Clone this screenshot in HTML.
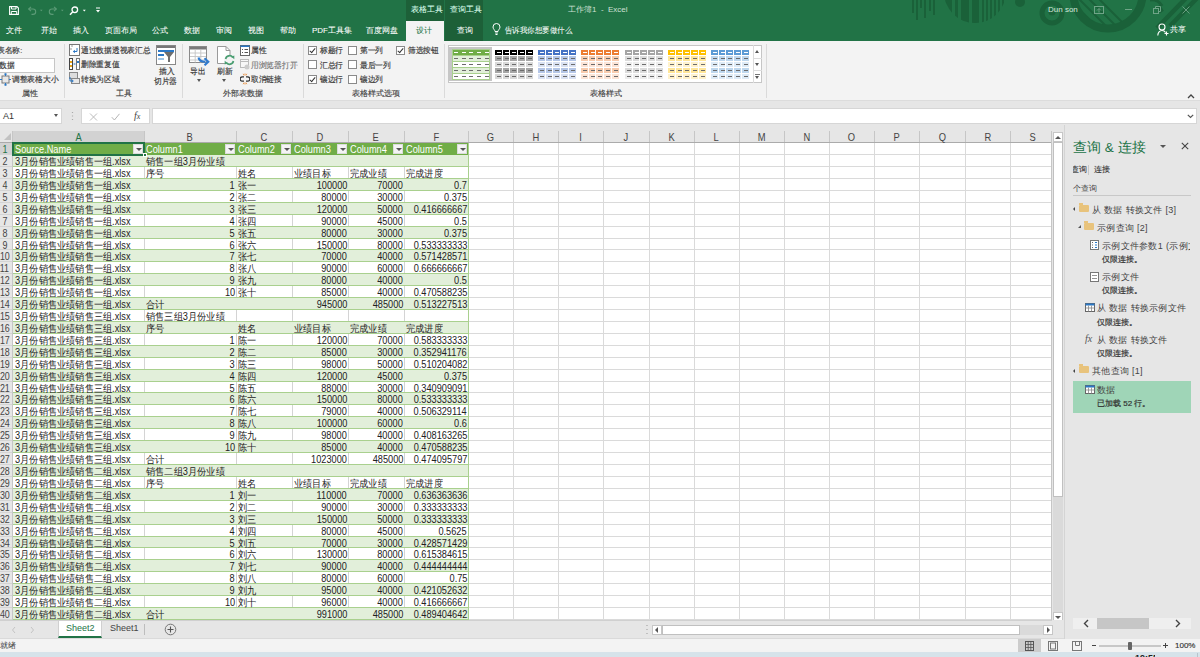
<!DOCTYPE html>
<html><head><meta charset="utf-8">
<style>
*{margin:0;padding:0;box-sizing:border-box}
html,body{width:1200px;height:657px;overflow:hidden;background:#fff;font-family:"Liberation Sans",sans-serif;color:#262626}
.a{position:absolute;white-space:nowrap}
.tab{position:absolute;top:27px;font-size:8px;color:#fff;line-height:8px;-webkit-text-stroke:0.05px currentColor;white-space:nowrap}
.hl{height:1px;background:#dadada}
.vl{width:1px;background:#dadada}
.vl2{width:1px;height:11px;background:#c6c6c6}
.ct{font-size:10px;line-height:11px;color:#222;transform:scaleX(0.92);transform-origin:0 0}
.ct.rt{transform-origin:100% 0}
.hd{color:#fff}
.fb{width:10px;height:10px;background:#f4f4f4;border:1px solid #dcdcdc}
.fb i{position:absolute;left:2px;top:3px;border-left:3px solid transparent;border-right:3px solid transparent;border-top:3px solid #555}
.colh{top:131px;height:11px;font-size:11px;line-height:13px;text-align:center;color:#444}
.colh span{display:inline-block;transform:scaleX(0.85)}
.colh.sel{color:#217346}
.rowh{left:-1px;width:11px;font-size:10.5px;line-height:12px;text-align:center;color:#444}
.rowh span{display:inline-block;transform:scaleX(0.85)}
.rowh.sel{color:#217346}
.rb{position:absolute;margin-top:1px;transform:scaleX(0.965);transform-origin:0 0;font-size:7.5px;line-height:10px;color:#3a3a3a;-webkit-text-stroke:0.18px #3a3a3a;white-space:nowrap}
.sep{top:44px;width:1px;height:54px;background:#dadada}
.tri{border-left:2.5px solid transparent;border-right:2.5px solid transparent;border-top:3px solid #555}
.cb{width:9px;height:9px;border:1px solid #8a8a8a;background:#fff}
.cb i{position:absolute;left:2px;top:0px;width:3px;height:6px;border-right:1px solid #333;border-bottom:1px solid #333;transform:rotate(40deg)}
.pt{position:absolute;margin-top:2px;font-size:8px;line-height:10px;color:#333;-webkit-text-stroke:0.2px #333;white-space:nowrap}
.pt2{position:absolute;margin-top:1px;font-size:9px;line-height:12px;color:#444;letter-spacing:0.3px;white-space:nowrap}
.fold{position:absolute;width:10px;height:7px;background:#e8c37c;border-radius:1px}
.fold:before{content:"";position:absolute;left:0;top:-2px;width:4px;height:2px;background:#e8c37c}
.gl{position:absolute;margin-top:1px;font-size:7.5px;line-height:10px;color:#444;-webkit-text-stroke:0.15px #444;white-space:nowrap}
</style></head><body>
<!-- title bar -->
<div class="a" style="left:0;top:0;width:1200px;height:41px;background:#217346"></div>
<div class="a" style="left:406px;top:0;width:38px;height:41px;background:#1d6038"></div>
<div class="a" style="left:445px;top:0;width:38px;height:41px;background:#1d6038"></div>
<div class="a" style="left:406px;top:21px;width:38px;height:20px;background:#f3f3f3"></div>
<!-- decorative pattern -->
<svg class="a" style="left:800px;top:0" width="400" height="41" viewBox="800 0 400 41">
 <g fill="#1a6139">
  <rect x="912" y="0" width="2" height="13"/><rect x="916" y="0" width="2" height="20"/><rect x="920" y="0" width="2" height="8"/><rect x="924" y="0" width="2" height="18"/><rect x="929" y="0" width="2" height="11"/><rect x="933" y="0" width="2" height="15"/>
 </g>
 <clipPath id="hc"><circle cx="975" cy="-8" r="31"/></clipPath>
 <g clip-path="url(#hc)" fill="#1a6139">
  <rect x="944" y="0" width="8" height="40"/><rect x="955" y="0" width="3" height="40"/><rect x="961" y="0" width="8" height="40"/><rect x="972" y="0" width="7" height="40"/><rect x="982" y="0" width="2" height="40"/><rect x="986" y="0" width="2" height="40"/><rect x="990" y="0" width="2" height="40"/><rect x="994" y="0" width="2" height="40"/><rect x="998" y="0" width="2" height="40"/><rect x="1002" y="0" width="2" height="40"/>
 </g>
 <circle cx="1020" cy="2" r="5" fill="#1a6139"/>
 <circle cx="1052" cy="13" r="10" fill="none" stroke="#1a6139" stroke-width="5"/>
 <circle cx="1052" cy="12" r="3.5" fill="#1a6139"/>
 <circle cx="1108" cy="-6" r="34.5" fill="none" stroke="#1a6139" stroke-width="8"/>
 <clipPath id="bc"><circle cx="1108" cy="-6" r="31"/></clipPath>
 <g clip-path="url(#bc)" stroke="#1a6139" stroke-width="2">
  <path d="M1060 0l40 40M1066 -4l40 40M1072 -8l40 40M1078 -12l40 40M1084 -16l40 40"/>
 </g>
 <g stroke="#1a6139" stroke-width="4.5">
  <path d="M1157 28l32-33M1170 26l32-33M1162 12l-4-6"/>
 </g>
 <path d="M1150 0a12 12 0 0 1 12 6" stroke="#1a6139" stroke-width="3" fill="none"/>
</svg>
<!-- QAT -->
<svg class="a" style="left:9px;top:6px" width="10" height="9" viewBox="0 0 10 9">
 <path d="M0.6 0.6h7.4l1.4 1.4v6.4H0.6z" fill="none" stroke="#fff" stroke-width="1.1"/>
 <path d="M2.5 0.6v2.4h4.5V0.6" fill="none" stroke="#fff" stroke-width="1"/>
 <path d="M2.3 8.4V5.5h5.4v2.9" fill="none" stroke="#fff" stroke-width="1"/>
</svg>
<svg class="a" style="left:27px;top:6px" width="17" height="9" viewBox="0 0 17 9">
 <path d="M2 3h4a2.7 2.7 0 0 1 0 5.4H4.5" fill="none" stroke="#5c9b77" stroke-width="1.1"/>
 <path d="M4 0.8L1.6 3 4 5.2" fill="none" stroke="#5c9b77" stroke-width="1.1"/>
 <path d="M13 3.8h2.6l-1.3 1.4z" fill="#5c9b77"/>
</svg>
<svg class="a" style="left:48px;top:6px" width="17" height="9" viewBox="0 0 17 9">
 <path d="M8 3H4a2.7 2.7 0 0 0 0 5.4h1.5" fill="none" stroke="#5c9b77" stroke-width="1.1"/>
 <path d="M6 0.8L8.4 3 6 5.2" fill="none" stroke="#5c9b77" stroke-width="1.1"/>
 <path d="M13 3.8h2.6l-1.3 1.4z" fill="#5c9b77"/>
</svg>
<svg class="a" style="left:69px;top:6px" width="19" height="10" viewBox="0 0 19 10">
 <circle cx="5.8" cy="3.8" r="2.8" fill="none" stroke="#fff" stroke-width="1.3"/>
 <path d="M3.8 5.8L1 8.8" stroke="#fff" stroke-width="1.5"/>
 <path d="M13.8 3.8h3l-1.5 1.7z" fill="#fff"/>
</svg>
<svg class="a" style="left:95px;top:7px" width="6" height="7" viewBox="0 0 6 7">
 <path d="M1 1h4" stroke="#fff" stroke-width="1"/>
 <path d="M1 3h4l-2 2.5z" fill="#fff"/>
</svg>
<!-- window controls -->
<svg class="a" style="left:1094px;top:6px" width="10" height="8" viewBox="0 0 10 8">
 <rect x="0.5" y="0.5" width="9" height="7" fill="none" stroke="#6fa487" stroke-width="1"/>
 <path d="M3 4.5l2-2 2 2M5 2.5v4" fill="none" stroke="#6fa487" stroke-width="0.9"/>
</svg>
<div class="a" style="left:1125px;top:9px;width:7px;height:1px;background:#6fa487"></div>
<svg class="a" style="left:1153px;top:6px" width="8" height="8" viewBox="0 0 8 8">
 <rect x="0.5" y="2.5" width="5" height="5" fill="none" stroke="#6fa487"/>
 <path d="M2.5 2.5v-2h5v5h-2" fill="none" stroke="#6fa487"/>
</svg>
<svg class="a" style="left:1182px;top:6px" width="8" height="8" viewBox="0 0 8 8">
 <path d="M0.5 0.5l7 7M7.5 0.5l-7 7" stroke="#6fa487" stroke-width="0.9"/>
</svg>
<!-- share -->
<svg class="a" style="left:1157px;top:23px" width="12" height="13" viewBox="0 0 12 13">
 <circle cx="5" cy="4" r="3" fill="none" stroke="#fff" stroke-width="1.1"/>
 <path d="M0.8 12.5c0-3 2-5 4.2-5s3 1 3.5 2" fill="none" stroke="#fff" stroke-width="1.1"/>
 <path d="M9.5 8.5v4M7.5 10.5h4" stroke="#fff" stroke-width="1.1"/>
</svg>
<!-- lightbulb -->
<svg class="a" style="left:492px;top:23px" width="9" height="12" viewBox="0 0 9 12">
 <path d="M3 8.5C3 7 1 6 1 4a3.5 3.5 0 0 1 7 0c0 2-2 3-2 4.5z" fill="none" stroke="#fff" stroke-width="1"/>
 <path d="M3.2 10h2.6M3.5 11.5h2" stroke="#fff" stroke-width="1"/>
</svg>

<div class="tab" style="left:6px">文件</div>
<div class="tab" style="left:41px">开始</div>
<div class="tab" style="left:73px">插入</div>
<div class="tab" style="left:105px">页面布局</div>
<div class="tab" style="left:152px">公式</div>
<div class="tab" style="left:184px">数据</div>
<div class="tab" style="left:216px">审阅</div>
<div class="tab" style="left:248px">视图</div>
<div class="tab" style="left:280px">帮助</div>
<div class="tab" style="left:312px">PDF工具集</div>
<div class="tab" style="left:366px">百度网盘</div>
<div class="tab" style="left:416px;color:#217346">设计</div>
<div class="tab" style="left:457px">查询</div>
<div class="tab" style="left:505px;transform:scaleX(0.93);transform-origin:0 0">告诉我你想要做什么</div>
<div class="tab" style="left:411px;top:6px;color:#dfe">表格工具</div>
<div class="tab" style="left:450px;top:6px;color:#dfe">查询工具</div>
<div class="tab" style="left:568px;top:6px;color:#cfe0d4;-webkit-text-stroke:0">工作簿1 &nbsp;- &nbsp;Excel</div>
<div class="tab" style="left:1048px;top:6px;color:#d5e6da;-webkit-text-stroke:0">Dun son</div>
<div class="tab" style="left:1170px;top:26px">共享</div>
<div class="a" style="left:0;top:100px;width:1200px;height:31px;background:#e6e6e6"></div>
<!-- ===== RIBBON ===== -->
<div class="a" style="left:0;top:41px;width:1200px;height:59px;background:#f3f3f3"></div>
<div class="a" style="left:0;top:100px;width:1200px;height:1px;background:#dcdcdc"></div>
<!-- group separators -->
<div class="a sep" style="left:64px"></div>
<div class="a sep" style="left:182px"></div>
<div class="a sep" style="left:303px"></div>
<div class="a sep" style="left:444px"></div>
<div class="a sep" style="left:766px"></div>
<!-- group labels -->
<div class="gl" style="left:22px;top:88px">属性</div>
<div class="gl" style="left:116px;top:88px">工具</div>
<div class="gl" style="left:223px;top:88px">外部表数据</div>
<div class="gl" style="left:352px;top:88px">表格样式选项</div>
<div class="gl" style="left:590px;top:88px">表格样式</div>
<!-- 属性 group -->
<div class="rb" style="left:-3px;top:45px">表名称:</div>
<div class="a" style="left:-1px;top:58px;width:56px;height:15px;background:#fff;border:1px solid #c6c6c6"></div>
<div class="rb" style="left:-1px;top:60px">数据</div>
<svg class="a" style="left:0;top:73px" width="11" height="13" viewBox="0 0 11 13">
 <rect x="2" y="3" width="7" height="7" fill="#e8e8e8" stroke="#7a7a7a" stroke-width="1"/>
 <path d="M5.5 0.5v2.5M5.5 10v2.5M0 6.5h2M9 6.5h2" stroke="#2b78c6" stroke-width="1"/>
 <path d="M4 1.5l1.5-1.2 1.5 1.2M4 11.5l1.5 1.2 1.5-1.2" stroke="#2b78c6" fill="none" stroke-width="0.9"/>
</svg>
<div class="rb" style="left:12px;top:74px">调整表格大小</div>
<!-- 工具 group -->
<svg class="a" style="left:69px;top:44px" width="11" height="12" viewBox="0 0 11 12">
 <rect x="0.5" y="0.5" width="10" height="11" fill="#fff" stroke="#777"/>
 <path d="M2 2h2M2 4v2" stroke="#999" stroke-width="1"/>
 <path d="M8 4v3.5H4.5M5.8 6.2L4.3 7.5l1.5 1.3" stroke="#2b78c6" stroke-width="1" fill="none"/>
</svg>
<div class="rb" style="left:81px;top:45px">通过数据透视表汇总</div>
<svg class="a" style="left:69px;top:58px" width="11" height="12" viewBox="0 0 11 12">
 <rect x="0.5" y="0.5" width="3" height="11" fill="#fff" stroke="#444"/>
 <rect x="7.5" y="0.5" width="3" height="11" fill="#fff" stroke="#777"/>
 <rect x="1" y="3" width="2" height="2" fill="#e8a317"/><rect x="1" y="7" width="2" height="2" fill="#e8a317"/>
 <rect x="8" y="3" width="2" height="2" fill="#2b78c6"/>
 <path d="M4.5 6h2" stroke="#2b78c6"/>
</svg>
<div class="rb" style="left:81px;top:59px">删除重复值</div>
<svg class="a" style="left:69px;top:72px" width="11" height="13" viewBox="0 0 11 13">
 <rect x="0.5" y="0.5" width="8" height="6" fill="#ddd" stroke="#888"/>
 <rect x="2.5" y="6.5" width="8" height="5" fill="#e8e8e8" stroke="#888"/>
 <path d="M1 5v4h3M3 7.8l1.3 1.2L3 10.2" stroke="#2b78c6" fill="none"/>
</svg>
<div class="rb" style="left:81px;top:74px">转换为区域</div>
<!-- insert slicer -->
<svg class="a" style="left:156px;top:45px" width="20" height="20" viewBox="0 0 20 20">
 <rect x="0.5" y="0.5" width="19" height="19" fill="#fff" stroke="#888"/>
 <rect x="1" y="1" width="18" height="2" fill="#777"/>
 <rect x="2" y="5" width="16" height="2" fill="#2b78c6"/>
 <rect x="2" y="9" width="6" height="2" fill="#2b78c6"/>
 <rect x="2" y="13" width="6" height="2" fill="#9cc3e6"/>
 <path d="M8 7h10l-4 5v5h-2v-5z" fill="#6d6d6d"/>
</svg>
<div class="rb" style="left:159px;top:66px">插入</div>
<div class="rb" style="left:154px;top:76px">切片器</div>
<!-- external table data -->
<svg class="a" style="left:189px;top:46px" width="21" height="20" viewBox="0 0 21 20">
 <rect x="0.5" y="0.5" width="17" height="16" fill="#fff" stroke="#8a8a8a"/>
 <rect x="1" y="1" width="16" height="2.5" fill="#7a7a7a"/>
 <path d="M1 7h16M1 10.5h16M1 14h16M6.2 3.5v13M11.8 3.5v13" stroke="#c4c4c4" stroke-width="0.9"/>
 <path d="M9.5 11.5c0.5 3 3 4.3 7 4.3" stroke="#2f7bd0" stroke-width="2.1" fill="none"/>
 <path d="M15.5 12.3l3.8 3.5-3.8 3.5" stroke="#2f7bd0" stroke-width="2.1" fill="none"/>
</svg>
<div class="rb" style="left:190px;top:66px">导出</div>
<div class="a tri" style="left:197px;top:79px"></div>
<svg class="a" style="left:216px;top:45px" width="20" height="21" viewBox="0 0 20 21">
 <path d="M1.5 1.5h8.5l4 4v13h-12.5z" fill="#fff" stroke="#9a9a9a"/>
 <path d="M10 1.5v4h4" fill="none" stroke="#9a9a9a"/>
 <circle cx="13.5" cy="15" r="5.3" fill="#f3f3f3"/>
 <path d="M9.6 14a4 4 0 0 1 7.2-1.6" stroke="#4a9e72" stroke-width="1.7" fill="none"/>
 <path d="M17.4 16a4 4 0 0 1-7.2 1.6" stroke="#4a9e72" stroke-width="1.7" fill="none"/>
 <path d="M15.3 11.8l3-1.2 0 3.6z" fill="#4a9e72"/>
 <path d="M11.7 18.2l-3 1.2 0-3.6z" fill="#4a9e72"/>
</svg>
<div class="rb" style="left:217px;top:66px">刷新</div>
<div class="a tri" style="left:222px;top:79px"></div>
<svg class="a" style="left:240px;top:45px" width="10" height="11" viewBox="0 0 10 11">
 <rect x="0.5" y="0.5" width="9" height="10" fill="#fff" stroke="#666"/>
 <rect x="0.5" y="0.5" width="9" height="1.5" fill="#2b78c6"/>
 <path d="M2 4.5h1M2 7.5h1M4.5 4.5h3.5M4.5 7.5h3.5" stroke="#555"/>
</svg>
<div class="rb" style="left:251px;top:45px">属性</div>
<svg class="a" style="left:240px;top:59px" width="10" height="11" viewBox="0 0 10 11">
 <rect x="0.5" y="0.5" width="8" height="8" fill="#f7f7f7" stroke="#bbb"/>
 <path d="M0.5 2.5h8" stroke="#bbb"/>
 <circle cx="7" cy="8" r="2.5" fill="#ccc"/>
</svg>
<div class="rb" style="left:251px;top:60px;color:#a6a6a6">用浏览器打开</div>
<svg class="a" style="left:240px;top:73px" width="10" height="12" viewBox="0 0 10 12">
 <path d="M4 3.8H2.3a2.2 2.2 0 0 0 0 4.4H4M6 3.8h1.7a2.2 2.2 0 0 1 0 4.4H6" stroke="#333" fill="none" stroke-width="1.2"/>
 <path d="M3.2 0.8l0.8 1.6M5 0.5v1.8M6.8 0.8L6 2.4M3.2 11.2l0.8-1.6M5 11.5V9.7M6.8 11.2L6 9.6" stroke="#e8862e" stroke-width="0.8"/>
</svg>
<div class="rb" style="left:251px;top:74px">取消链接</div>
<!-- table style options checkboxes -->
<div class="a cb" style="left:308px;top:46px"><i></i></div>
<div class="rb" style="left:320px;top:45px">标题行</div>
<div class="a cb" style="left:308px;top:60px"></div>
<div class="rb" style="left:320px;top:60px">汇总行</div>
<div class="a cb" style="left:308px;top:75px"><i></i></div>
<div class="rb" style="left:320px;top:74px">镶边行</div>
<div class="a cb" style="left:348px;top:46px"></div>
<div class="rb" style="left:360px;top:45px">第一列</div>
<div class="a cb" style="left:348px;top:60px"></div>
<div class="rb" style="left:360px;top:60px">最后一列</div>
<div class="a cb" style="left:348px;top:75px"></div>
<div class="rb" style="left:360px;top:74px">镶边列</div>
<div class="a cb" style="left:396px;top:46px"><i></i></div>
<div class="rb" style="left:408px;top:45px">筛选按钮</div>
<!-- gallery -->
<div class="a" style="left:448px;top:45px;width:314px;height:38px;background:#fff;border:1px solid #c6c6c6"></div>
<div class="a" style="left:449px;top:47px;width:43px;height:34px;background:#c6c6c6"></div>
<div class="a" style="left:452px;top:49px;width:38px;height:31px;background:#a9d08e"></div>
<div class="a" style="left:453px;top:50px;width:36px;height:5px;background:#70ad47"></div>
<div class="a" style="left:454px;top:52px;width:4px;height:1px;background:#fff"></div>
<div class="a" style="left:462px;top:52px;width:4px;height:1px;background:#fff"></div>
<div class="a" style="left:469px;top:52px;width:4px;height:1px;background:#fff"></div>
<div class="a" style="left:477px;top:52px;width:4px;height:1px;background:#fff"></div>
<div class="a" style="left:485px;top:52px;width:4px;height:1px;background:#fff"></div>
<div class="a" style="left:453px;top:56px;width:36px;height:5px;background:#e2efda"></div>
<div class="a" style="left:454px;top:58px;width:4px;height:1px;background:#6b6b6b"></div>
<div class="a" style="left:462px;top:58px;width:4px;height:1px;background:#6b6b6b"></div>
<div class="a" style="left:469px;top:58px;width:4px;height:1px;background:#6b6b6b"></div>
<div class="a" style="left:477px;top:58px;width:4px;height:1px;background:#6b6b6b"></div>
<div class="a" style="left:485px;top:58px;width:4px;height:1px;background:#6b6b6b"></div>
<div class="a" style="left:453px;top:62px;width:36px;height:5px;background:#fff"></div>
<div class="a" style="left:454px;top:64px;width:4px;height:1px;background:#6b6b6b"></div>
<div class="a" style="left:462px;top:64px;width:4px;height:1px;background:#6b6b6b"></div>
<div class="a" style="left:469px;top:64px;width:4px;height:1px;background:#6b6b6b"></div>
<div class="a" style="left:477px;top:64px;width:4px;height:1px;background:#6b6b6b"></div>
<div class="a" style="left:485px;top:64px;width:4px;height:1px;background:#6b6b6b"></div>
<div class="a" style="left:453px;top:68px;width:36px;height:5px;background:#e2efda"></div>
<div class="a" style="left:454px;top:70px;width:4px;height:1px;background:#6b6b6b"></div>
<div class="a" style="left:462px;top:70px;width:4px;height:1px;background:#6b6b6b"></div>
<div class="a" style="left:469px;top:70px;width:4px;height:1px;background:#6b6b6b"></div>
<div class="a" style="left:477px;top:70px;width:4px;height:1px;background:#6b6b6b"></div>
<div class="a" style="left:485px;top:70px;width:4px;height:1px;background:#6b6b6b"></div>
<div class="a" style="left:453px;top:74px;width:36px;height:5px;background:#fff"></div>
<div class="a" style="left:454px;top:76px;width:4px;height:1px;background:#6b6b6b"></div>
<div class="a" style="left:462px;top:76px;width:4px;height:1px;background:#6b6b6b"></div>
<div class="a" style="left:469px;top:76px;width:4px;height:1px;background:#6b6b6b"></div>
<div class="a" style="left:477px;top:76px;width:4px;height:1px;background:#6b6b6b"></div>
<div class="a" style="left:485px;top:76px;width:4px;height:1px;background:#6b6b6b"></div>
<div class="a" style="left:495px;top:50px;width:7px;height:5px;background:#000000"></div>
<div class="a" style="left:497px;top:52px;width:4px;height:1px;background:#fff"></div>
<div class="a" style="left:503px;top:50px;width:6px;height:5px;background:#000000"></div>
<div class="a" style="left:505px;top:52px;width:4px;height:1px;background:#fff"></div>
<div class="a" style="left:510px;top:50px;width:7px;height:5px;background:#000000"></div>
<div class="a" style="left:512px;top:52px;width:4px;height:1px;background:#fff"></div>
<div class="a" style="left:518px;top:50px;width:7px;height:5px;background:#000000"></div>
<div class="a" style="left:520px;top:52px;width:4px;height:1px;background:#fff"></div>
<div class="a" style="left:526px;top:50px;width:7px;height:5px;background:#000000"></div>
<div class="a" style="left:528px;top:52px;width:4px;height:1px;background:#fff"></div>
<div class="a" style="left:495px;top:56px;width:7px;height:5px;background:#a6a6a6"></div>
<div class="a" style="left:497px;top:58px;width:4px;height:1px;background:#6b6b6b"></div>
<div class="a" style="left:503px;top:56px;width:6px;height:5px;background:#a6a6a6"></div>
<div class="a" style="left:505px;top:58px;width:4px;height:1px;background:#6b6b6b"></div>
<div class="a" style="left:510px;top:56px;width:7px;height:5px;background:#a6a6a6"></div>
<div class="a" style="left:512px;top:58px;width:4px;height:1px;background:#6b6b6b"></div>
<div class="a" style="left:518px;top:56px;width:7px;height:5px;background:#a6a6a6"></div>
<div class="a" style="left:520px;top:58px;width:4px;height:1px;background:#6b6b6b"></div>
<div class="a" style="left:526px;top:56px;width:7px;height:5px;background:#a6a6a6"></div>
<div class="a" style="left:528px;top:58px;width:4px;height:1px;background:#6b6b6b"></div>
<div class="a" style="left:495px;top:62px;width:7px;height:5px;background:#d9d9d9"></div>
<div class="a" style="left:497px;top:64px;width:4px;height:1px;background:#6b6b6b"></div>
<div class="a" style="left:503px;top:62px;width:6px;height:5px;background:#d9d9d9"></div>
<div class="a" style="left:505px;top:64px;width:4px;height:1px;background:#6b6b6b"></div>
<div class="a" style="left:510px;top:62px;width:7px;height:5px;background:#d9d9d9"></div>
<div class="a" style="left:512px;top:64px;width:4px;height:1px;background:#6b6b6b"></div>
<div class="a" style="left:518px;top:62px;width:7px;height:5px;background:#d9d9d9"></div>
<div class="a" style="left:520px;top:64px;width:4px;height:1px;background:#6b6b6b"></div>
<div class="a" style="left:526px;top:62px;width:7px;height:5px;background:#d9d9d9"></div>
<div class="a" style="left:528px;top:64px;width:4px;height:1px;background:#6b6b6b"></div>
<div class="a" style="left:495px;top:68px;width:7px;height:5px;background:#a6a6a6"></div>
<div class="a" style="left:497px;top:70px;width:4px;height:1px;background:#6b6b6b"></div>
<div class="a" style="left:503px;top:68px;width:6px;height:5px;background:#a6a6a6"></div>
<div class="a" style="left:505px;top:70px;width:4px;height:1px;background:#6b6b6b"></div>
<div class="a" style="left:510px;top:68px;width:7px;height:5px;background:#a6a6a6"></div>
<div class="a" style="left:512px;top:70px;width:4px;height:1px;background:#6b6b6b"></div>
<div class="a" style="left:518px;top:68px;width:7px;height:5px;background:#a6a6a6"></div>
<div class="a" style="left:520px;top:70px;width:4px;height:1px;background:#6b6b6b"></div>
<div class="a" style="left:526px;top:68px;width:7px;height:5px;background:#a6a6a6"></div>
<div class="a" style="left:528px;top:70px;width:4px;height:1px;background:#6b6b6b"></div>
<div class="a" style="left:495px;top:74px;width:7px;height:5px;background:#d9d9d9"></div>
<div class="a" style="left:497px;top:76px;width:4px;height:1px;background:#6b6b6b"></div>
<div class="a" style="left:503px;top:74px;width:6px;height:5px;background:#d9d9d9"></div>
<div class="a" style="left:505px;top:76px;width:4px;height:1px;background:#6b6b6b"></div>
<div class="a" style="left:510px;top:74px;width:7px;height:5px;background:#d9d9d9"></div>
<div class="a" style="left:512px;top:76px;width:4px;height:1px;background:#6b6b6b"></div>
<div class="a" style="left:518px;top:74px;width:7px;height:5px;background:#d9d9d9"></div>
<div class="a" style="left:520px;top:76px;width:4px;height:1px;background:#6b6b6b"></div>
<div class="a" style="left:526px;top:74px;width:7px;height:5px;background:#d9d9d9"></div>
<div class="a" style="left:528px;top:76px;width:4px;height:1px;background:#6b6b6b"></div>
<div class="a" style="left:538px;top:50px;width:7px;height:5px;background:#4472c4"></div>
<div class="a" style="left:540px;top:52px;width:4px;height:1px;background:#fff"></div>
<div class="a" style="left:546px;top:50px;width:6px;height:5px;background:#4472c4"></div>
<div class="a" style="left:548px;top:52px;width:4px;height:1px;background:#fff"></div>
<div class="a" style="left:553px;top:50px;width:7px;height:5px;background:#4472c4"></div>
<div class="a" style="left:555px;top:52px;width:4px;height:1px;background:#fff"></div>
<div class="a" style="left:561px;top:50px;width:7px;height:5px;background:#4472c4"></div>
<div class="a" style="left:563px;top:52px;width:4px;height:1px;background:#fff"></div>
<div class="a" style="left:569px;top:50px;width:7px;height:5px;background:#4472c4"></div>
<div class="a" style="left:571px;top:52px;width:4px;height:1px;background:#fff"></div>
<div class="a" style="left:538px;top:56px;width:7px;height:5px;background:#b4c6e7"></div>
<div class="a" style="left:540px;top:58px;width:4px;height:1px;background:#6b6b6b"></div>
<div class="a" style="left:546px;top:56px;width:6px;height:5px;background:#b4c6e7"></div>
<div class="a" style="left:548px;top:58px;width:4px;height:1px;background:#6b6b6b"></div>
<div class="a" style="left:553px;top:56px;width:7px;height:5px;background:#b4c6e7"></div>
<div class="a" style="left:555px;top:58px;width:4px;height:1px;background:#6b6b6b"></div>
<div class="a" style="left:561px;top:56px;width:7px;height:5px;background:#b4c6e7"></div>
<div class="a" style="left:563px;top:58px;width:4px;height:1px;background:#6b6b6b"></div>
<div class="a" style="left:569px;top:56px;width:7px;height:5px;background:#b4c6e7"></div>
<div class="a" style="left:571px;top:58px;width:4px;height:1px;background:#6b6b6b"></div>
<div class="a" style="left:538px;top:62px;width:7px;height:5px;background:#d9e1f2"></div>
<div class="a" style="left:540px;top:64px;width:4px;height:1px;background:#6b6b6b"></div>
<div class="a" style="left:546px;top:62px;width:6px;height:5px;background:#d9e1f2"></div>
<div class="a" style="left:548px;top:64px;width:4px;height:1px;background:#6b6b6b"></div>
<div class="a" style="left:553px;top:62px;width:7px;height:5px;background:#d9e1f2"></div>
<div class="a" style="left:555px;top:64px;width:4px;height:1px;background:#6b6b6b"></div>
<div class="a" style="left:561px;top:62px;width:7px;height:5px;background:#d9e1f2"></div>
<div class="a" style="left:563px;top:64px;width:4px;height:1px;background:#6b6b6b"></div>
<div class="a" style="left:569px;top:62px;width:7px;height:5px;background:#d9e1f2"></div>
<div class="a" style="left:571px;top:64px;width:4px;height:1px;background:#6b6b6b"></div>
<div class="a" style="left:538px;top:68px;width:7px;height:5px;background:#b4c6e7"></div>
<div class="a" style="left:540px;top:70px;width:4px;height:1px;background:#6b6b6b"></div>
<div class="a" style="left:546px;top:68px;width:6px;height:5px;background:#b4c6e7"></div>
<div class="a" style="left:548px;top:70px;width:4px;height:1px;background:#6b6b6b"></div>
<div class="a" style="left:553px;top:68px;width:7px;height:5px;background:#b4c6e7"></div>
<div class="a" style="left:555px;top:70px;width:4px;height:1px;background:#6b6b6b"></div>
<div class="a" style="left:561px;top:68px;width:7px;height:5px;background:#b4c6e7"></div>
<div class="a" style="left:563px;top:70px;width:4px;height:1px;background:#6b6b6b"></div>
<div class="a" style="left:569px;top:68px;width:7px;height:5px;background:#b4c6e7"></div>
<div class="a" style="left:571px;top:70px;width:4px;height:1px;background:#6b6b6b"></div>
<div class="a" style="left:538px;top:74px;width:7px;height:5px;background:#d9e1f2"></div>
<div class="a" style="left:540px;top:76px;width:4px;height:1px;background:#6b6b6b"></div>
<div class="a" style="left:546px;top:74px;width:6px;height:5px;background:#d9e1f2"></div>
<div class="a" style="left:548px;top:76px;width:4px;height:1px;background:#6b6b6b"></div>
<div class="a" style="left:553px;top:74px;width:7px;height:5px;background:#d9e1f2"></div>
<div class="a" style="left:555px;top:76px;width:4px;height:1px;background:#6b6b6b"></div>
<div class="a" style="left:561px;top:74px;width:7px;height:5px;background:#d9e1f2"></div>
<div class="a" style="left:563px;top:76px;width:4px;height:1px;background:#6b6b6b"></div>
<div class="a" style="left:569px;top:74px;width:7px;height:5px;background:#d9e1f2"></div>
<div class="a" style="left:571px;top:76px;width:4px;height:1px;background:#6b6b6b"></div>
<div class="a" style="left:581px;top:50px;width:7px;height:5px;background:#ed7d31"></div>
<div class="a" style="left:583px;top:52px;width:4px;height:1px;background:#fff"></div>
<div class="a" style="left:589px;top:50px;width:6px;height:5px;background:#ed7d31"></div>
<div class="a" style="left:591px;top:52px;width:4px;height:1px;background:#fff"></div>
<div class="a" style="left:596px;top:50px;width:7px;height:5px;background:#ed7d31"></div>
<div class="a" style="left:598px;top:52px;width:4px;height:1px;background:#fff"></div>
<div class="a" style="left:604px;top:50px;width:7px;height:5px;background:#ed7d31"></div>
<div class="a" style="left:606px;top:52px;width:4px;height:1px;background:#fff"></div>
<div class="a" style="left:612px;top:50px;width:7px;height:5px;background:#ed7d31"></div>
<div class="a" style="left:614px;top:52px;width:4px;height:1px;background:#fff"></div>
<div class="a" style="left:581px;top:56px;width:7px;height:5px;background:#f8cbad"></div>
<div class="a" style="left:583px;top:58px;width:4px;height:1px;background:#6b6b6b"></div>
<div class="a" style="left:589px;top:56px;width:6px;height:5px;background:#f8cbad"></div>
<div class="a" style="left:591px;top:58px;width:4px;height:1px;background:#6b6b6b"></div>
<div class="a" style="left:596px;top:56px;width:7px;height:5px;background:#f8cbad"></div>
<div class="a" style="left:598px;top:58px;width:4px;height:1px;background:#6b6b6b"></div>
<div class="a" style="left:604px;top:56px;width:7px;height:5px;background:#f8cbad"></div>
<div class="a" style="left:606px;top:58px;width:4px;height:1px;background:#6b6b6b"></div>
<div class="a" style="left:612px;top:56px;width:7px;height:5px;background:#f8cbad"></div>
<div class="a" style="left:614px;top:58px;width:4px;height:1px;background:#6b6b6b"></div>
<div class="a" style="left:581px;top:62px;width:7px;height:5px;background:#fce4d6"></div>
<div class="a" style="left:583px;top:64px;width:4px;height:1px;background:#6b6b6b"></div>
<div class="a" style="left:589px;top:62px;width:6px;height:5px;background:#fce4d6"></div>
<div class="a" style="left:591px;top:64px;width:4px;height:1px;background:#6b6b6b"></div>
<div class="a" style="left:596px;top:62px;width:7px;height:5px;background:#fce4d6"></div>
<div class="a" style="left:598px;top:64px;width:4px;height:1px;background:#6b6b6b"></div>
<div class="a" style="left:604px;top:62px;width:7px;height:5px;background:#fce4d6"></div>
<div class="a" style="left:606px;top:64px;width:4px;height:1px;background:#6b6b6b"></div>
<div class="a" style="left:612px;top:62px;width:7px;height:5px;background:#fce4d6"></div>
<div class="a" style="left:614px;top:64px;width:4px;height:1px;background:#6b6b6b"></div>
<div class="a" style="left:581px;top:68px;width:7px;height:5px;background:#f8cbad"></div>
<div class="a" style="left:583px;top:70px;width:4px;height:1px;background:#6b6b6b"></div>
<div class="a" style="left:589px;top:68px;width:6px;height:5px;background:#f8cbad"></div>
<div class="a" style="left:591px;top:70px;width:4px;height:1px;background:#6b6b6b"></div>
<div class="a" style="left:596px;top:68px;width:7px;height:5px;background:#f8cbad"></div>
<div class="a" style="left:598px;top:70px;width:4px;height:1px;background:#6b6b6b"></div>
<div class="a" style="left:604px;top:68px;width:7px;height:5px;background:#f8cbad"></div>
<div class="a" style="left:606px;top:70px;width:4px;height:1px;background:#6b6b6b"></div>
<div class="a" style="left:612px;top:68px;width:7px;height:5px;background:#f8cbad"></div>
<div class="a" style="left:614px;top:70px;width:4px;height:1px;background:#6b6b6b"></div>
<div class="a" style="left:581px;top:74px;width:7px;height:5px;background:#fce4d6"></div>
<div class="a" style="left:583px;top:76px;width:4px;height:1px;background:#6b6b6b"></div>
<div class="a" style="left:589px;top:74px;width:6px;height:5px;background:#fce4d6"></div>
<div class="a" style="left:591px;top:76px;width:4px;height:1px;background:#6b6b6b"></div>
<div class="a" style="left:596px;top:74px;width:7px;height:5px;background:#fce4d6"></div>
<div class="a" style="left:598px;top:76px;width:4px;height:1px;background:#6b6b6b"></div>
<div class="a" style="left:604px;top:74px;width:7px;height:5px;background:#fce4d6"></div>
<div class="a" style="left:606px;top:76px;width:4px;height:1px;background:#6b6b6b"></div>
<div class="a" style="left:612px;top:74px;width:7px;height:5px;background:#fce4d6"></div>
<div class="a" style="left:614px;top:76px;width:4px;height:1px;background:#6b6b6b"></div>
<div class="a" style="left:625px;top:50px;width:7px;height:5px;background:#a5a5a5"></div>
<div class="a" style="left:627px;top:52px;width:4px;height:1px;background:#fff"></div>
<div class="a" style="left:633px;top:50px;width:6px;height:5px;background:#a5a5a5"></div>
<div class="a" style="left:635px;top:52px;width:4px;height:1px;background:#fff"></div>
<div class="a" style="left:640px;top:50px;width:7px;height:5px;background:#a5a5a5"></div>
<div class="a" style="left:642px;top:52px;width:4px;height:1px;background:#fff"></div>
<div class="a" style="left:648px;top:50px;width:7px;height:5px;background:#a5a5a5"></div>
<div class="a" style="left:650px;top:52px;width:4px;height:1px;background:#fff"></div>
<div class="a" style="left:656px;top:50px;width:7px;height:5px;background:#a5a5a5"></div>
<div class="a" style="left:658px;top:52px;width:4px;height:1px;background:#fff"></div>
<div class="a" style="left:625px;top:56px;width:7px;height:5px;background:#dbdbdb"></div>
<div class="a" style="left:627px;top:58px;width:4px;height:1px;background:#6b6b6b"></div>
<div class="a" style="left:633px;top:56px;width:6px;height:5px;background:#dbdbdb"></div>
<div class="a" style="left:635px;top:58px;width:4px;height:1px;background:#6b6b6b"></div>
<div class="a" style="left:640px;top:56px;width:7px;height:5px;background:#dbdbdb"></div>
<div class="a" style="left:642px;top:58px;width:4px;height:1px;background:#6b6b6b"></div>
<div class="a" style="left:648px;top:56px;width:7px;height:5px;background:#dbdbdb"></div>
<div class="a" style="left:650px;top:58px;width:4px;height:1px;background:#6b6b6b"></div>
<div class="a" style="left:656px;top:56px;width:7px;height:5px;background:#dbdbdb"></div>
<div class="a" style="left:658px;top:58px;width:4px;height:1px;background:#6b6b6b"></div>
<div class="a" style="left:625px;top:62px;width:7px;height:5px;background:#ededed"></div>
<div class="a" style="left:627px;top:64px;width:4px;height:1px;background:#6b6b6b"></div>
<div class="a" style="left:633px;top:62px;width:6px;height:5px;background:#ededed"></div>
<div class="a" style="left:635px;top:64px;width:4px;height:1px;background:#6b6b6b"></div>
<div class="a" style="left:640px;top:62px;width:7px;height:5px;background:#ededed"></div>
<div class="a" style="left:642px;top:64px;width:4px;height:1px;background:#6b6b6b"></div>
<div class="a" style="left:648px;top:62px;width:7px;height:5px;background:#ededed"></div>
<div class="a" style="left:650px;top:64px;width:4px;height:1px;background:#6b6b6b"></div>
<div class="a" style="left:656px;top:62px;width:7px;height:5px;background:#ededed"></div>
<div class="a" style="left:658px;top:64px;width:4px;height:1px;background:#6b6b6b"></div>
<div class="a" style="left:625px;top:68px;width:7px;height:5px;background:#dbdbdb"></div>
<div class="a" style="left:627px;top:70px;width:4px;height:1px;background:#6b6b6b"></div>
<div class="a" style="left:633px;top:68px;width:6px;height:5px;background:#dbdbdb"></div>
<div class="a" style="left:635px;top:70px;width:4px;height:1px;background:#6b6b6b"></div>
<div class="a" style="left:640px;top:68px;width:7px;height:5px;background:#dbdbdb"></div>
<div class="a" style="left:642px;top:70px;width:4px;height:1px;background:#6b6b6b"></div>
<div class="a" style="left:648px;top:68px;width:7px;height:5px;background:#dbdbdb"></div>
<div class="a" style="left:650px;top:70px;width:4px;height:1px;background:#6b6b6b"></div>
<div class="a" style="left:656px;top:68px;width:7px;height:5px;background:#dbdbdb"></div>
<div class="a" style="left:658px;top:70px;width:4px;height:1px;background:#6b6b6b"></div>
<div class="a" style="left:625px;top:74px;width:7px;height:5px;background:#ededed"></div>
<div class="a" style="left:627px;top:76px;width:4px;height:1px;background:#6b6b6b"></div>
<div class="a" style="left:633px;top:74px;width:6px;height:5px;background:#ededed"></div>
<div class="a" style="left:635px;top:76px;width:4px;height:1px;background:#6b6b6b"></div>
<div class="a" style="left:640px;top:74px;width:7px;height:5px;background:#ededed"></div>
<div class="a" style="left:642px;top:76px;width:4px;height:1px;background:#6b6b6b"></div>
<div class="a" style="left:648px;top:74px;width:7px;height:5px;background:#ededed"></div>
<div class="a" style="left:650px;top:76px;width:4px;height:1px;background:#6b6b6b"></div>
<div class="a" style="left:656px;top:74px;width:7px;height:5px;background:#ededed"></div>
<div class="a" style="left:658px;top:76px;width:4px;height:1px;background:#6b6b6b"></div>
<div class="a" style="left:668px;top:50px;width:7px;height:5px;background:#ffc000"></div>
<div class="a" style="left:670px;top:52px;width:4px;height:1px;background:#fff"></div>
<div class="a" style="left:676px;top:50px;width:6px;height:5px;background:#ffc000"></div>
<div class="a" style="left:678px;top:52px;width:4px;height:1px;background:#fff"></div>
<div class="a" style="left:683px;top:50px;width:7px;height:5px;background:#ffc000"></div>
<div class="a" style="left:685px;top:52px;width:4px;height:1px;background:#fff"></div>
<div class="a" style="left:691px;top:50px;width:7px;height:5px;background:#ffc000"></div>
<div class="a" style="left:693px;top:52px;width:4px;height:1px;background:#fff"></div>
<div class="a" style="left:699px;top:50px;width:7px;height:5px;background:#ffc000"></div>
<div class="a" style="left:701px;top:52px;width:4px;height:1px;background:#fff"></div>
<div class="a" style="left:668px;top:56px;width:7px;height:5px;background:#ffe699"></div>
<div class="a" style="left:670px;top:58px;width:4px;height:1px;background:#6b6b6b"></div>
<div class="a" style="left:676px;top:56px;width:6px;height:5px;background:#ffe699"></div>
<div class="a" style="left:678px;top:58px;width:4px;height:1px;background:#6b6b6b"></div>
<div class="a" style="left:683px;top:56px;width:7px;height:5px;background:#ffe699"></div>
<div class="a" style="left:685px;top:58px;width:4px;height:1px;background:#6b6b6b"></div>
<div class="a" style="left:691px;top:56px;width:7px;height:5px;background:#ffe699"></div>
<div class="a" style="left:693px;top:58px;width:4px;height:1px;background:#6b6b6b"></div>
<div class="a" style="left:699px;top:56px;width:7px;height:5px;background:#ffe699"></div>
<div class="a" style="left:701px;top:58px;width:4px;height:1px;background:#6b6b6b"></div>
<div class="a" style="left:668px;top:62px;width:7px;height:5px;background:#fff2cc"></div>
<div class="a" style="left:670px;top:64px;width:4px;height:1px;background:#6b6b6b"></div>
<div class="a" style="left:676px;top:62px;width:6px;height:5px;background:#fff2cc"></div>
<div class="a" style="left:678px;top:64px;width:4px;height:1px;background:#6b6b6b"></div>
<div class="a" style="left:683px;top:62px;width:7px;height:5px;background:#fff2cc"></div>
<div class="a" style="left:685px;top:64px;width:4px;height:1px;background:#6b6b6b"></div>
<div class="a" style="left:691px;top:62px;width:7px;height:5px;background:#fff2cc"></div>
<div class="a" style="left:693px;top:64px;width:4px;height:1px;background:#6b6b6b"></div>
<div class="a" style="left:699px;top:62px;width:7px;height:5px;background:#fff2cc"></div>
<div class="a" style="left:701px;top:64px;width:4px;height:1px;background:#6b6b6b"></div>
<div class="a" style="left:668px;top:68px;width:7px;height:5px;background:#ffe699"></div>
<div class="a" style="left:670px;top:70px;width:4px;height:1px;background:#6b6b6b"></div>
<div class="a" style="left:676px;top:68px;width:6px;height:5px;background:#ffe699"></div>
<div class="a" style="left:678px;top:70px;width:4px;height:1px;background:#6b6b6b"></div>
<div class="a" style="left:683px;top:68px;width:7px;height:5px;background:#ffe699"></div>
<div class="a" style="left:685px;top:70px;width:4px;height:1px;background:#6b6b6b"></div>
<div class="a" style="left:691px;top:68px;width:7px;height:5px;background:#ffe699"></div>
<div class="a" style="left:693px;top:70px;width:4px;height:1px;background:#6b6b6b"></div>
<div class="a" style="left:699px;top:68px;width:7px;height:5px;background:#ffe699"></div>
<div class="a" style="left:701px;top:70px;width:4px;height:1px;background:#6b6b6b"></div>
<div class="a" style="left:668px;top:74px;width:7px;height:5px;background:#fff2cc"></div>
<div class="a" style="left:670px;top:76px;width:4px;height:1px;background:#6b6b6b"></div>
<div class="a" style="left:676px;top:74px;width:6px;height:5px;background:#fff2cc"></div>
<div class="a" style="left:678px;top:76px;width:4px;height:1px;background:#6b6b6b"></div>
<div class="a" style="left:683px;top:74px;width:7px;height:5px;background:#fff2cc"></div>
<div class="a" style="left:685px;top:76px;width:4px;height:1px;background:#6b6b6b"></div>
<div class="a" style="left:691px;top:74px;width:7px;height:5px;background:#fff2cc"></div>
<div class="a" style="left:693px;top:76px;width:4px;height:1px;background:#6b6b6b"></div>
<div class="a" style="left:699px;top:74px;width:7px;height:5px;background:#fff2cc"></div>
<div class="a" style="left:701px;top:76px;width:4px;height:1px;background:#6b6b6b"></div>
<div class="a" style="left:711px;top:50px;width:7px;height:5px;background:#5b9bd5"></div>
<div class="a" style="left:713px;top:52px;width:4px;height:1px;background:#fff"></div>
<div class="a" style="left:719px;top:50px;width:6px;height:5px;background:#5b9bd5"></div>
<div class="a" style="left:721px;top:52px;width:4px;height:1px;background:#fff"></div>
<div class="a" style="left:726px;top:50px;width:7px;height:5px;background:#5b9bd5"></div>
<div class="a" style="left:728px;top:52px;width:4px;height:1px;background:#fff"></div>
<div class="a" style="left:734px;top:50px;width:7px;height:5px;background:#5b9bd5"></div>
<div class="a" style="left:736px;top:52px;width:4px;height:1px;background:#fff"></div>
<div class="a" style="left:742px;top:50px;width:7px;height:5px;background:#5b9bd5"></div>
<div class="a" style="left:744px;top:52px;width:4px;height:1px;background:#fff"></div>
<div class="a" style="left:711px;top:56px;width:7px;height:5px;background:#bdd7ee"></div>
<div class="a" style="left:713px;top:58px;width:4px;height:1px;background:#6b6b6b"></div>
<div class="a" style="left:719px;top:56px;width:6px;height:5px;background:#bdd7ee"></div>
<div class="a" style="left:721px;top:58px;width:4px;height:1px;background:#6b6b6b"></div>
<div class="a" style="left:726px;top:56px;width:7px;height:5px;background:#bdd7ee"></div>
<div class="a" style="left:728px;top:58px;width:4px;height:1px;background:#6b6b6b"></div>
<div class="a" style="left:734px;top:56px;width:7px;height:5px;background:#bdd7ee"></div>
<div class="a" style="left:736px;top:58px;width:4px;height:1px;background:#6b6b6b"></div>
<div class="a" style="left:742px;top:56px;width:7px;height:5px;background:#bdd7ee"></div>
<div class="a" style="left:744px;top:58px;width:4px;height:1px;background:#6b6b6b"></div>
<div class="a" style="left:711px;top:62px;width:7px;height:5px;background:#ddebf7"></div>
<div class="a" style="left:713px;top:64px;width:4px;height:1px;background:#6b6b6b"></div>
<div class="a" style="left:719px;top:62px;width:6px;height:5px;background:#ddebf7"></div>
<div class="a" style="left:721px;top:64px;width:4px;height:1px;background:#6b6b6b"></div>
<div class="a" style="left:726px;top:62px;width:7px;height:5px;background:#ddebf7"></div>
<div class="a" style="left:728px;top:64px;width:4px;height:1px;background:#6b6b6b"></div>
<div class="a" style="left:734px;top:62px;width:7px;height:5px;background:#ddebf7"></div>
<div class="a" style="left:736px;top:64px;width:4px;height:1px;background:#6b6b6b"></div>
<div class="a" style="left:742px;top:62px;width:7px;height:5px;background:#ddebf7"></div>
<div class="a" style="left:744px;top:64px;width:4px;height:1px;background:#6b6b6b"></div>
<div class="a" style="left:711px;top:68px;width:7px;height:5px;background:#bdd7ee"></div>
<div class="a" style="left:713px;top:70px;width:4px;height:1px;background:#6b6b6b"></div>
<div class="a" style="left:719px;top:68px;width:6px;height:5px;background:#bdd7ee"></div>
<div class="a" style="left:721px;top:70px;width:4px;height:1px;background:#6b6b6b"></div>
<div class="a" style="left:726px;top:68px;width:7px;height:5px;background:#bdd7ee"></div>
<div class="a" style="left:728px;top:70px;width:4px;height:1px;background:#6b6b6b"></div>
<div class="a" style="left:734px;top:68px;width:7px;height:5px;background:#bdd7ee"></div>
<div class="a" style="left:736px;top:70px;width:4px;height:1px;background:#6b6b6b"></div>
<div class="a" style="left:742px;top:68px;width:7px;height:5px;background:#bdd7ee"></div>
<div class="a" style="left:744px;top:70px;width:4px;height:1px;background:#6b6b6b"></div>
<div class="a" style="left:711px;top:74px;width:7px;height:5px;background:#ddebf7"></div>
<div class="a" style="left:713px;top:76px;width:4px;height:1px;background:#6b6b6b"></div>
<div class="a" style="left:719px;top:74px;width:6px;height:5px;background:#ddebf7"></div>
<div class="a" style="left:721px;top:76px;width:4px;height:1px;background:#6b6b6b"></div>
<div class="a" style="left:726px;top:74px;width:7px;height:5px;background:#ddebf7"></div>
<div class="a" style="left:728px;top:76px;width:4px;height:1px;background:#6b6b6b"></div>
<div class="a" style="left:734px;top:74px;width:7px;height:5px;background:#ddebf7"></div>
<div class="a" style="left:736px;top:76px;width:4px;height:1px;background:#6b6b6b"></div>
<div class="a" style="left:742px;top:74px;width:7px;height:5px;background:#ddebf7"></div>
<div class="a" style="left:744px;top:76px;width:4px;height:1px;background:#6b6b6b"></div>
<div class="a" style="left:753px;top:45px;width:9px;height:38px;border-left:1px solid #dcdcdc"></div>
<div class="a" style="left:753px;top:58px;width:9px;height:1px;background:#dcdcdc"></div>
<div class="a" style="left:753px;top:70px;width:9px;height:1px;background:#dcdcdc"></div>
<div class="a" style="left:755px;top:50px;border-left:2.5px solid transparent;border-right:2.5px solid transparent;border-bottom:3px solid #555"></div>
<div class="a" style="left:755px;top:63px;border-left:2.5px solid transparent;border-right:2.5px solid transparent;border-top:3px solid #555"></div>
<div class="a" style="left:755px;top:74px;width:5px;height:1px;background:#777"></div>
<div class="a" style="left:755px;top:76px;border-left:2.5px solid transparent;border-right:2.5px solid transparent;border-top:3px solid #555"></div>
<!-- collapse caret -->
<svg class="a" style="left:1187px;top:93px" width="8" height="6" viewBox="0 0 8 6"><path d="M1 5l3-3 3 3" stroke="#444" stroke-width="1.3" fill="none"/></svg>

<!-- formula bar -->
<div class="a" style="left:0;top:108px;width:62px;height:16px;background:#fff;border:1px solid #d6d6d6;border-left:0"></div>
<div class="a" style="left:81px;top:108px;width:69px;height:16px;background:#fff;border:1px solid #d6d6d6"></div>
<div class="a" style="left:152px;top:108px;width:1045px;height:16px;background:#fff;border:1px solid #d6d6d6"></div>
<div class="a" style="left:3px;top:111px;font-size:9px;line-height:11px;color:#333">A1</div>
<div class="a" style="left:54px;top:114px;border-left:2.5px solid transparent;border-right:2.5px solid transparent;border-top:3px solid #555"></div>
<svg class="a" style="left:71px;top:111px" width="3" height="10" viewBox="0 0 3 10"><path d="M1.5 1v1M1.5 4.5v1M1.5 8v1" stroke="#aaa" stroke-width="1.2"/></svg>
<svg class="a" style="left:89px;top:113px" width="9" height="8" viewBox="0 0 9 8"><path d="M1 0.5l7 7M8 0.5l-7 7" stroke="#b4b4b4" stroke-width="0.9"/></svg>
<svg class="a" style="left:111px;top:113px" width="9" height="8" viewBox="0 0 9 8"><path d="M0.8 4.2l2.6 2.8L8.5 0.8" stroke="#b4b4b4" stroke-width="1" fill="none"/></svg>
<div class="a" style="left:134px;top:110px;font-family:'Liberation Serif',serif;font-style:italic;font-size:10px;line-height:12px;color:#444">f<span style="font-size:8px">x</span></div>
<svg class="a" style="left:1187px;top:114px" width="7" height="5" viewBox="0 0 7 5"><path d="M0.8 0.8l2.7 2.7 2.7-2.7" stroke="#555" stroke-width="1.2" fill="none"/></svg>
<div class="a" style="left:0;top:131px;width:1052px;height:11px;background:#e6e6e6"></div>
<div class="a" style="left:0;top:142px;width:1052px;height:1px;background:#ababab"></div>
<div class="a" style="left:13px;top:131px;width:131px;height:11px;background:#d2d2d2"></div>
<div class="a vl2" style="left:144px;top:131px"></div>
<div class="a colh sel" style="left:13px;width:131px"><span>A</span></div>
<div class="a vl2" style="left:236px;top:131px"></div>
<div class="a colh" style="left:144px;width:92px"><span>B</span></div>
<div class="a vl2" style="left:292px;top:131px"></div>
<div class="a colh" style="left:236px;width:56px"><span>C</span></div>
<div class="a vl2" style="left:348px;top:131px"></div>
<div class="a colh" style="left:292px;width:56px"><span>D</span></div>
<div class="a vl2" style="left:404px;top:131px"></div>
<div class="a colh" style="left:348px;width:56px"><span>E</span></div>
<div class="a vl2" style="left:468px;top:131px"></div>
<div class="a colh" style="left:404px;width:64px"><span>F</span></div>
<div class="a vl2" style="left:513px;top:131px"></div>
<div class="a colh" style="left:468px;width:45px"><span>G</span></div>
<div class="a vl2" style="left:558px;top:131px"></div>
<div class="a colh" style="left:513px;width:45px"><span>H</span></div>
<div class="a vl2" style="left:603px;top:131px"></div>
<div class="a colh" style="left:558px;width:45px"><span>I</span></div>
<div class="a vl2" style="left:649px;top:131px"></div>
<div class="a colh" style="left:603px;width:46px"><span>J</span></div>
<div class="a vl2" style="left:694px;top:131px"></div>
<div class="a colh" style="left:649px;width:45px"><span>K</span></div>
<div class="a vl2" style="left:739px;top:131px"></div>
<div class="a colh" style="left:694px;width:45px"><span>L</span></div>
<div class="a vl2" style="left:784px;top:131px"></div>
<div class="a colh" style="left:739px;width:45px"><span>M</span></div>
<div class="a vl2" style="left:829px;top:131px"></div>
<div class="a colh" style="left:784px;width:45px"><span>N</span></div>
<div class="a vl2" style="left:874px;top:131px"></div>
<div class="a colh" style="left:829px;width:45px"><span>O</span></div>
<div class="a vl2" style="left:919px;top:131px"></div>
<div class="a colh" style="left:874px;width:45px"><span>P</span></div>
<div class="a vl2" style="left:965px;top:131px"></div>
<div class="a colh" style="left:919px;width:46px"><span>Q</span></div>
<div class="a vl2" style="left:1010px;top:131px"></div>
<div class="a colh" style="left:965px;width:45px"><span>R</span></div>
<div class="a vl2" style="left:1055px;top:131px"></div>
<div class="a colh" style="left:1010px;width:45px"><span>S</span></div>
<div class="a" style="left:0;top:143px;width:13px;height:477px;background:#e6e6e6"></div>
<div class="a" style="left:12px;top:131px;width:1px;height:489px;background:#c6c6c6"></div>
<div class="a" style="left:4px;top:133px;width:0;height:0;border-left:7px solid transparent;border-bottom:7px solid #c2c2c2"></div>
<div class="a" style="left:0;top:143px;width:12px;height:11px;background:#d2d2d2"></div>
<div class="a" style="left:0;top:154px;width:12px;height:1px;background:#d4d4d4"></div>
<div class="a rowh sel" style="top:143px"><span>1</span></div>
<div class="a" style="left:0;top:166px;width:12px;height:1px;background:#d4d4d4"></div>
<div class="a rowh" style="top:155px"><span>2</span></div>
<div class="a" style="left:0;top:178px;width:12px;height:1px;background:#d4d4d4"></div>
<div class="a rowh" style="top:167px"><span>3</span></div>
<div class="a" style="left:0;top:190px;width:12px;height:1px;background:#d4d4d4"></div>
<div class="a rowh" style="top:179px"><span>4</span></div>
<div class="a" style="left:0;top:202px;width:12px;height:1px;background:#d4d4d4"></div>
<div class="a rowh" style="top:191px"><span>5</span></div>
<div class="a" style="left:0;top:214px;width:12px;height:1px;background:#d4d4d4"></div>
<div class="a rowh" style="top:203px"><span>6</span></div>
<div class="a" style="left:0;top:226px;width:12px;height:1px;background:#d4d4d4"></div>
<div class="a rowh" style="top:215px"><span>7</span></div>
<div class="a" style="left:0;top:238px;width:12px;height:1px;background:#d4d4d4"></div>
<div class="a rowh" style="top:227px"><span>8</span></div>
<div class="a" style="left:0;top:249px;width:12px;height:1px;background:#d4d4d4"></div>
<div class="a rowh" style="top:239px"><span>9</span></div>
<div class="a" style="left:0;top:261px;width:12px;height:1px;background:#d4d4d4"></div>
<div class="a rowh" style="top:250px"><span>10</span></div>
<div class="a" style="left:0;top:273px;width:12px;height:1px;background:#d4d4d4"></div>
<div class="a rowh" style="top:262px"><span>11</span></div>
<div class="a" style="left:0;top:285px;width:12px;height:1px;background:#d4d4d4"></div>
<div class="a rowh" style="top:274px"><span>12</span></div>
<div class="a" style="left:0;top:297px;width:12px;height:1px;background:#d4d4d4"></div>
<div class="a rowh" style="top:286px"><span>13</span></div>
<div class="a" style="left:0;top:309px;width:12px;height:1px;background:#d4d4d4"></div>
<div class="a rowh" style="top:298px"><span>14</span></div>
<div class="a" style="left:0;top:321px;width:12px;height:1px;background:#d4d4d4"></div>
<div class="a rowh" style="top:310px"><span>15</span></div>
<div class="a" style="left:0;top:333px;width:12px;height:1px;background:#d4d4d4"></div>
<div class="a rowh" style="top:322px"><span>16</span></div>
<div class="a" style="left:0;top:345px;width:12px;height:1px;background:#d4d4d4"></div>
<div class="a rowh" style="top:334px"><span>17</span></div>
<div class="a" style="left:0;top:357px;width:12px;height:1px;background:#d4d4d4"></div>
<div class="a rowh" style="top:346px"><span>18</span></div>
<div class="a" style="left:0;top:369px;width:12px;height:1px;background:#d4d4d4"></div>
<div class="a rowh" style="top:358px"><span>19</span></div>
<div class="a" style="left:0;top:381px;width:12px;height:1px;background:#d4d4d4"></div>
<div class="a rowh" style="top:370px"><span>20</span></div>
<div class="a" style="left:0;top:392px;width:12px;height:1px;background:#d4d4d4"></div>
<div class="a rowh" style="top:382px"><span>21</span></div>
<div class="a" style="left:0;top:404px;width:12px;height:1px;background:#d4d4d4"></div>
<div class="a rowh" style="top:393px"><span>22</span></div>
<div class="a" style="left:0;top:416px;width:12px;height:1px;background:#d4d4d4"></div>
<div class="a rowh" style="top:405px"><span>23</span></div>
<div class="a" style="left:0;top:428px;width:12px;height:1px;background:#d4d4d4"></div>
<div class="a rowh" style="top:417px"><span>24</span></div>
<div class="a" style="left:0;top:440px;width:12px;height:1px;background:#d4d4d4"></div>
<div class="a rowh" style="top:429px"><span>25</span></div>
<div class="a" style="left:0;top:452px;width:12px;height:1px;background:#d4d4d4"></div>
<div class="a rowh" style="top:441px"><span>26</span></div>
<div class="a" style="left:0;top:464px;width:12px;height:1px;background:#d4d4d4"></div>
<div class="a rowh" style="top:453px"><span>27</span></div>
<div class="a" style="left:0;top:476px;width:12px;height:1px;background:#d4d4d4"></div>
<div class="a rowh" style="top:465px"><span>28</span></div>
<div class="a" style="left:0;top:488px;width:12px;height:1px;background:#d4d4d4"></div>
<div class="a rowh" style="top:477px"><span>29</span></div>
<div class="a" style="left:0;top:500px;width:12px;height:1px;background:#d4d4d4"></div>
<div class="a rowh" style="top:489px"><span>30</span></div>
<div class="a" style="left:0;top:512px;width:12px;height:1px;background:#d4d4d4"></div>
<div class="a rowh" style="top:501px"><span>31</span></div>
<div class="a" style="left:0;top:524px;width:12px;height:1px;background:#d4d4d4"></div>
<div class="a rowh" style="top:513px"><span>32</span></div>
<div class="a" style="left:0;top:536px;width:12px;height:1px;background:#d4d4d4"></div>
<div class="a rowh" style="top:525px"><span>33</span></div>
<div class="a" style="left:0;top:547px;width:12px;height:1px;background:#d4d4d4"></div>
<div class="a rowh" style="top:537px"><span>34</span></div>
<div class="a" style="left:0;top:559px;width:12px;height:1px;background:#d4d4d4"></div>
<div class="a rowh" style="top:548px"><span>35</span></div>
<div class="a" style="left:0;top:571px;width:12px;height:1px;background:#d4d4d4"></div>
<div class="a rowh" style="top:560px"><span>36</span></div>
<div class="a" style="left:0;top:583px;width:12px;height:1px;background:#d4d4d4"></div>
<div class="a rowh" style="top:572px"><span>37</span></div>
<div class="a" style="left:0;top:595px;width:12px;height:1px;background:#d4d4d4"></div>
<div class="a rowh" style="top:584px"><span>38</span></div>
<div class="a" style="left:0;top:607px;width:12px;height:1px;background:#d4d4d4"></div>
<div class="a rowh" style="top:596px"><span>39</span></div>
<div class="a" style="left:0;top:619px;width:12px;height:1px;background:#d4d4d4"></div>
<div class="a rowh" style="top:608px"><span>40</span></div>
<div class="a" style="left:13px;top:143px;width:1039px;height:477px;background:#fff"></div>
<div class="a hl" style="top:154px;left:468px;width:584px"></div>
<div class="a hl" style="top:166px;left:468px;width:584px"></div>
<div class="a hl" style="top:178px;left:468px;width:584px"></div>
<div class="a hl" style="top:190px;left:468px;width:584px"></div>
<div class="a hl" style="top:202px;left:468px;width:584px"></div>
<div class="a hl" style="top:214px;left:468px;width:584px"></div>
<div class="a hl" style="top:226px;left:468px;width:584px"></div>
<div class="a hl" style="top:238px;left:468px;width:584px"></div>
<div class="a hl" style="top:249px;left:468px;width:584px"></div>
<div class="a hl" style="top:261px;left:468px;width:584px"></div>
<div class="a hl" style="top:273px;left:468px;width:584px"></div>
<div class="a hl" style="top:285px;left:468px;width:584px"></div>
<div class="a hl" style="top:297px;left:468px;width:584px"></div>
<div class="a hl" style="top:309px;left:468px;width:584px"></div>
<div class="a hl" style="top:321px;left:468px;width:584px"></div>
<div class="a hl" style="top:333px;left:468px;width:584px"></div>
<div class="a hl" style="top:345px;left:468px;width:584px"></div>
<div class="a hl" style="top:357px;left:468px;width:584px"></div>
<div class="a hl" style="top:369px;left:468px;width:584px"></div>
<div class="a hl" style="top:381px;left:468px;width:584px"></div>
<div class="a hl" style="top:392px;left:468px;width:584px"></div>
<div class="a hl" style="top:404px;left:468px;width:584px"></div>
<div class="a hl" style="top:416px;left:468px;width:584px"></div>
<div class="a hl" style="top:428px;left:468px;width:584px"></div>
<div class="a hl" style="top:440px;left:468px;width:584px"></div>
<div class="a hl" style="top:452px;left:468px;width:584px"></div>
<div class="a hl" style="top:464px;left:468px;width:584px"></div>
<div class="a hl" style="top:476px;left:468px;width:584px"></div>
<div class="a hl" style="top:488px;left:468px;width:584px"></div>
<div class="a hl" style="top:500px;left:468px;width:584px"></div>
<div class="a hl" style="top:512px;left:468px;width:584px"></div>
<div class="a hl" style="top:524px;left:468px;width:584px"></div>
<div class="a hl" style="top:536px;left:468px;width:584px"></div>
<div class="a hl" style="top:547px;left:468px;width:584px"></div>
<div class="a hl" style="top:559px;left:468px;width:584px"></div>
<div class="a hl" style="top:571px;left:468px;width:584px"></div>
<div class="a hl" style="top:583px;left:468px;width:584px"></div>
<div class="a hl" style="top:595px;left:468px;width:584px"></div>
<div class="a hl" style="top:607px;left:468px;width:584px"></div>
<div class="a hl" style="top:619px;left:468px;width:584px"></div>
<div class="a vl" style="left:513px;top:143px;height:477px"></div>
<div class="a vl" style="left:558px;top:143px;height:477px"></div>
<div class="a vl" style="left:603px;top:143px;height:477px"></div>
<div class="a vl" style="left:649px;top:143px;height:477px"></div>
<div class="a vl" style="left:694px;top:143px;height:477px"></div>
<div class="a vl" style="left:739px;top:143px;height:477px"></div>
<div class="a vl" style="left:784px;top:143px;height:477px"></div>
<div class="a vl" style="left:829px;top:143px;height:477px"></div>
<div class="a vl" style="left:874px;top:143px;height:477px"></div>
<div class="a vl" style="left:919px;top:143px;height:477px"></div>
<div class="a vl" style="left:965px;top:143px;height:477px"></div>
<div class="a vl" style="left:1010px;top:143px;height:477px"></div>
<div class="a" style="left:13px;top:143px;width:455px;height:12px;background:#70ad47"></div>
<div class="a" style="left:468px;top:143px;width:1px;height:12px;background:#a9d08e"></div>
<div class="a ct hd" style="left:15px;top:144px">Source.Name</div>
<div class="a fb" style="left:133px;top:144px"><i></i></div>
<div class="a ct hd" style="left:146px;top:144px">Column1</div>
<div class="a fb" style="left:225px;top:144px"><i></i></div>
<div class="a ct hd" style="left:238px;top:144px">Column2</div>
<div class="a fb" style="left:281px;top:144px"><i></i></div>
<div class="a ct hd" style="left:294px;top:144px">Column3</div>
<div class="a fb" style="left:337px;top:144px"><i></i></div>
<div class="a ct hd" style="left:350px;top:144px">Column4</div>
<div class="a fb" style="left:393px;top:144px"><i></i></div>
<div class="a ct hd" style="left:406px;top:144px">Column5</div>
<div class="a fb" style="left:457px;top:144px"><i></i></div>
<div class="a" style="left:13px;top:155px;width:455px;height:11px;background:#e2efda"></div>
<div class="a" style="left:13px;top:166px;width:455px;height:1px;background:#a9d08e"></div>
<div class="a" style="left:468px;top:155px;width:1px;height:12px;background:#a9d08e"></div>
<div class="a ct" style="left:15px;top:156px">3月份销售业绩销售一组.xlsx</div>
<div class="a ct" style="left:146px;top:156px">销售一组3月份业绩</div>
<div class="a" style="left:13px;top:167px;width:455px;height:11px;background:#fff"></div>
<div class="a" style="left:13px;top:178px;width:455px;height:1px;background:#a9d08e"></div>
<div class="a" style="left:144px;top:167px;width:1px;height:11px;background:#d4d4d4"></div>
<div class="a" style="left:236px;top:167px;width:1px;height:11px;background:#d4d4d4"></div>
<div class="a" style="left:292px;top:167px;width:1px;height:11px;background:#d4d4d4"></div>
<div class="a" style="left:348px;top:167px;width:1px;height:11px;background:#d4d4d4"></div>
<div class="a" style="left:404px;top:167px;width:1px;height:11px;background:#d4d4d4"></div>
<div class="a" style="left:468px;top:167px;width:1px;height:12px;background:#a9d08e"></div>
<div class="a ct" style="left:15px;top:168px">3月份销售业绩销售一组.xlsx</div>
<div class="a ct" style="left:146px;top:168px">序号</div>
<div class="a ct" style="left:238px;top:168px">姓名</div>
<div class="a ct" style="left:294px;top:168px">业绩目标</div>
<div class="a ct" style="left:350px;top:168px">完成业绩</div>
<div class="a ct" style="left:406px;top:168px">完成进度</div>
<div class="a" style="left:13px;top:179px;width:455px;height:11px;background:#e2efda"></div>
<div class="a" style="left:13px;top:190px;width:455px;height:1px;background:#a9d08e"></div>
<div class="a" style="left:468px;top:179px;width:1px;height:12px;background:#a9d08e"></div>
<div class="a ct" style="left:15px;top:180px">3月份销售业绩销售一组.xlsx</div>
<div class="a ct rt" style="right:965px;top:180px">1</div>
<div class="a ct" style="left:238px;top:180px">张一</div>
<div class="a ct rt" style="right:853px;top:180px">100000</div>
<div class="a ct rt" style="right:797px;top:180px">70000</div>
<div class="a ct rt" style="right:733px;top:180px">0.7</div>
<div class="a" style="left:13px;top:191px;width:455px;height:11px;background:#fff"></div>
<div class="a" style="left:13px;top:202px;width:455px;height:1px;background:#a9d08e"></div>
<div class="a" style="left:144px;top:191px;width:1px;height:11px;background:#d4d4d4"></div>
<div class="a" style="left:236px;top:191px;width:1px;height:11px;background:#d4d4d4"></div>
<div class="a" style="left:292px;top:191px;width:1px;height:11px;background:#d4d4d4"></div>
<div class="a" style="left:348px;top:191px;width:1px;height:11px;background:#d4d4d4"></div>
<div class="a" style="left:404px;top:191px;width:1px;height:11px;background:#d4d4d4"></div>
<div class="a" style="left:468px;top:191px;width:1px;height:12px;background:#a9d08e"></div>
<div class="a ct" style="left:15px;top:192px">3月份销售业绩销售一组.xlsx</div>
<div class="a ct rt" style="right:965px;top:192px">2</div>
<div class="a ct" style="left:238px;top:192px">张二</div>
<div class="a ct rt" style="right:853px;top:192px">80000</div>
<div class="a ct rt" style="right:797px;top:192px">30000</div>
<div class="a ct rt" style="right:733px;top:192px">0.375</div>
<div class="a" style="left:13px;top:203px;width:455px;height:11px;background:#e2efda"></div>
<div class="a" style="left:13px;top:214px;width:455px;height:1px;background:#a9d08e"></div>
<div class="a" style="left:468px;top:203px;width:1px;height:12px;background:#a9d08e"></div>
<div class="a ct" style="left:15px;top:204px">3月份销售业绩销售一组.xlsx</div>
<div class="a ct rt" style="right:965px;top:204px">3</div>
<div class="a ct" style="left:238px;top:204px">张三</div>
<div class="a ct rt" style="right:853px;top:204px">120000</div>
<div class="a ct rt" style="right:797px;top:204px">50000</div>
<div class="a ct rt" style="right:733px;top:204px">0.416666667</div>
<div class="a" style="left:13px;top:215px;width:455px;height:11px;background:#fff"></div>
<div class="a" style="left:13px;top:226px;width:455px;height:1px;background:#a9d08e"></div>
<div class="a" style="left:144px;top:215px;width:1px;height:11px;background:#d4d4d4"></div>
<div class="a" style="left:236px;top:215px;width:1px;height:11px;background:#d4d4d4"></div>
<div class="a" style="left:292px;top:215px;width:1px;height:11px;background:#d4d4d4"></div>
<div class="a" style="left:348px;top:215px;width:1px;height:11px;background:#d4d4d4"></div>
<div class="a" style="left:404px;top:215px;width:1px;height:11px;background:#d4d4d4"></div>
<div class="a" style="left:468px;top:215px;width:1px;height:12px;background:#a9d08e"></div>
<div class="a ct" style="left:15px;top:216px">3月份销售业绩销售一组.xlsx</div>
<div class="a ct rt" style="right:965px;top:216px">4</div>
<div class="a ct" style="left:238px;top:216px">张四</div>
<div class="a ct rt" style="right:853px;top:216px">90000</div>
<div class="a ct rt" style="right:797px;top:216px">45000</div>
<div class="a ct rt" style="right:733px;top:216px">0.5</div>
<div class="a" style="left:13px;top:227px;width:455px;height:11px;background:#e2efda"></div>
<div class="a" style="left:13px;top:238px;width:455px;height:1px;background:#a9d08e"></div>
<div class="a" style="left:468px;top:227px;width:1px;height:12px;background:#a9d08e"></div>
<div class="a ct" style="left:15px;top:228px">3月份销售业绩销售一组.xlsx</div>
<div class="a ct rt" style="right:965px;top:228px">5</div>
<div class="a ct" style="left:238px;top:228px">张五</div>
<div class="a ct rt" style="right:853px;top:228px">80000</div>
<div class="a ct rt" style="right:797px;top:228px">30000</div>
<div class="a ct rt" style="right:733px;top:228px">0.375</div>
<div class="a" style="left:13px;top:239px;width:455px;height:10px;background:#fff"></div>
<div class="a" style="left:13px;top:249px;width:455px;height:1px;background:#a9d08e"></div>
<div class="a" style="left:144px;top:239px;width:1px;height:10px;background:#d4d4d4"></div>
<div class="a" style="left:236px;top:239px;width:1px;height:10px;background:#d4d4d4"></div>
<div class="a" style="left:292px;top:239px;width:1px;height:10px;background:#d4d4d4"></div>
<div class="a" style="left:348px;top:239px;width:1px;height:10px;background:#d4d4d4"></div>
<div class="a" style="left:404px;top:239px;width:1px;height:10px;background:#d4d4d4"></div>
<div class="a" style="left:468px;top:239px;width:1px;height:11px;background:#a9d08e"></div>
<div class="a ct" style="left:15px;top:240px">3月份销售业绩销售一组.xlsx</div>
<div class="a ct rt" style="right:965px;top:240px">6</div>
<div class="a ct" style="left:238px;top:240px">张六</div>
<div class="a ct rt" style="right:853px;top:240px">150000</div>
<div class="a ct rt" style="right:797px;top:240px">80000</div>
<div class="a ct rt" style="right:733px;top:240px">0.533333333</div>
<div class="a" style="left:13px;top:250px;width:455px;height:11px;background:#e2efda"></div>
<div class="a" style="left:13px;top:261px;width:455px;height:1px;background:#a9d08e"></div>
<div class="a" style="left:468px;top:250px;width:1px;height:12px;background:#a9d08e"></div>
<div class="a ct" style="left:15px;top:251px">3月份销售业绩销售一组.xlsx</div>
<div class="a ct rt" style="right:965px;top:251px">7</div>
<div class="a ct" style="left:238px;top:251px">张七</div>
<div class="a ct rt" style="right:853px;top:251px">70000</div>
<div class="a ct rt" style="right:797px;top:251px">40000</div>
<div class="a ct rt" style="right:733px;top:251px">0.571428571</div>
<div class="a" style="left:13px;top:262px;width:455px;height:11px;background:#fff"></div>
<div class="a" style="left:13px;top:273px;width:455px;height:1px;background:#a9d08e"></div>
<div class="a" style="left:144px;top:262px;width:1px;height:11px;background:#d4d4d4"></div>
<div class="a" style="left:236px;top:262px;width:1px;height:11px;background:#d4d4d4"></div>
<div class="a" style="left:292px;top:262px;width:1px;height:11px;background:#d4d4d4"></div>
<div class="a" style="left:348px;top:262px;width:1px;height:11px;background:#d4d4d4"></div>
<div class="a" style="left:404px;top:262px;width:1px;height:11px;background:#d4d4d4"></div>
<div class="a" style="left:468px;top:262px;width:1px;height:12px;background:#a9d08e"></div>
<div class="a ct" style="left:15px;top:263px">3月份销售业绩销售一组.xlsx</div>
<div class="a ct rt" style="right:965px;top:263px">8</div>
<div class="a ct" style="left:238px;top:263px">张八</div>
<div class="a ct rt" style="right:853px;top:263px">90000</div>
<div class="a ct rt" style="right:797px;top:263px">60000</div>
<div class="a ct rt" style="right:733px;top:263px">0.666666667</div>
<div class="a" style="left:13px;top:274px;width:455px;height:11px;background:#e2efda"></div>
<div class="a" style="left:13px;top:285px;width:455px;height:1px;background:#a9d08e"></div>
<div class="a" style="left:468px;top:274px;width:1px;height:12px;background:#a9d08e"></div>
<div class="a ct" style="left:15px;top:275px">3月份销售业绩销售一组.xlsx</div>
<div class="a ct rt" style="right:965px;top:275px">9</div>
<div class="a ct" style="left:238px;top:275px">张九</div>
<div class="a ct rt" style="right:853px;top:275px">80000</div>
<div class="a ct rt" style="right:797px;top:275px">40000</div>
<div class="a ct rt" style="right:733px;top:275px">0.5</div>
<div class="a" style="left:13px;top:286px;width:455px;height:11px;background:#fff"></div>
<div class="a" style="left:13px;top:297px;width:455px;height:1px;background:#a9d08e"></div>
<div class="a" style="left:144px;top:286px;width:1px;height:11px;background:#d4d4d4"></div>
<div class="a" style="left:236px;top:286px;width:1px;height:11px;background:#d4d4d4"></div>
<div class="a" style="left:292px;top:286px;width:1px;height:11px;background:#d4d4d4"></div>
<div class="a" style="left:348px;top:286px;width:1px;height:11px;background:#d4d4d4"></div>
<div class="a" style="left:404px;top:286px;width:1px;height:11px;background:#d4d4d4"></div>
<div class="a" style="left:468px;top:286px;width:1px;height:12px;background:#a9d08e"></div>
<div class="a ct" style="left:15px;top:287px">3月份销售业绩销售一组.xlsx</div>
<div class="a ct rt" style="right:965px;top:287px">10</div>
<div class="a ct" style="left:238px;top:287px">张十</div>
<div class="a ct rt" style="right:853px;top:287px">85000</div>
<div class="a ct rt" style="right:797px;top:287px">40000</div>
<div class="a ct rt" style="right:733px;top:287px">0.470588235</div>
<div class="a" style="left:13px;top:298px;width:455px;height:11px;background:#e2efda"></div>
<div class="a" style="left:13px;top:309px;width:455px;height:1px;background:#a9d08e"></div>
<div class="a" style="left:468px;top:298px;width:1px;height:12px;background:#a9d08e"></div>
<div class="a ct" style="left:15px;top:299px">3月份销售业绩销售一组.xlsx</div>
<div class="a ct" style="left:146px;top:299px">合计</div>
<div class="a ct rt" style="right:853px;top:299px">945000</div>
<div class="a ct rt" style="right:797px;top:299px">485000</div>
<div class="a ct rt" style="right:733px;top:299px">0.513227513</div>
<div class="a" style="left:13px;top:310px;width:455px;height:11px;background:#fff"></div>
<div class="a" style="left:13px;top:321px;width:455px;height:1px;background:#a9d08e"></div>
<div class="a" style="left:144px;top:310px;width:1px;height:11px;background:#d4d4d4"></div>
<div class="a" style="left:236px;top:310px;width:1px;height:11px;background:#d4d4d4"></div>
<div class="a" style="left:292px;top:310px;width:1px;height:11px;background:#d4d4d4"></div>
<div class="a" style="left:348px;top:310px;width:1px;height:11px;background:#d4d4d4"></div>
<div class="a" style="left:404px;top:310px;width:1px;height:11px;background:#d4d4d4"></div>
<div class="a" style="left:468px;top:310px;width:1px;height:12px;background:#a9d08e"></div>
<div class="a ct" style="left:15px;top:311px">3月份销售业绩销售三组.xlsx</div>
<div class="a ct" style="left:146px;top:311px">销售三组3月份业绩</div>
<div class="a" style="left:13px;top:322px;width:455px;height:11px;background:#e2efda"></div>
<div class="a" style="left:13px;top:333px;width:455px;height:1px;background:#a9d08e"></div>
<div class="a" style="left:468px;top:322px;width:1px;height:12px;background:#a9d08e"></div>
<div class="a ct" style="left:15px;top:323px">3月份销售业绩销售三组.xlsx</div>
<div class="a ct" style="left:146px;top:323px">序号</div>
<div class="a ct" style="left:238px;top:323px">姓名</div>
<div class="a ct" style="left:294px;top:323px">业绩目标</div>
<div class="a ct" style="left:350px;top:323px">完成业绩</div>
<div class="a ct" style="left:406px;top:323px">完成进度</div>
<div class="a" style="left:13px;top:334px;width:455px;height:11px;background:#fff"></div>
<div class="a" style="left:13px;top:345px;width:455px;height:1px;background:#a9d08e"></div>
<div class="a" style="left:144px;top:334px;width:1px;height:11px;background:#d4d4d4"></div>
<div class="a" style="left:236px;top:334px;width:1px;height:11px;background:#d4d4d4"></div>
<div class="a" style="left:292px;top:334px;width:1px;height:11px;background:#d4d4d4"></div>
<div class="a" style="left:348px;top:334px;width:1px;height:11px;background:#d4d4d4"></div>
<div class="a" style="left:404px;top:334px;width:1px;height:11px;background:#d4d4d4"></div>
<div class="a" style="left:468px;top:334px;width:1px;height:12px;background:#a9d08e"></div>
<div class="a ct" style="left:15px;top:335px">3月份销售业绩销售三组.xlsx</div>
<div class="a ct rt" style="right:965px;top:335px">1</div>
<div class="a ct" style="left:238px;top:335px">陈一</div>
<div class="a ct rt" style="right:853px;top:335px">120000</div>
<div class="a ct rt" style="right:797px;top:335px">70000</div>
<div class="a ct rt" style="right:733px;top:335px">0.583333333</div>
<div class="a" style="left:13px;top:346px;width:455px;height:11px;background:#e2efda"></div>
<div class="a" style="left:13px;top:357px;width:455px;height:1px;background:#a9d08e"></div>
<div class="a" style="left:468px;top:346px;width:1px;height:12px;background:#a9d08e"></div>
<div class="a ct" style="left:15px;top:347px">3月份销售业绩销售三组.xlsx</div>
<div class="a ct rt" style="right:965px;top:347px">2</div>
<div class="a ct" style="left:238px;top:347px">陈二</div>
<div class="a ct rt" style="right:853px;top:347px">85000</div>
<div class="a ct rt" style="right:797px;top:347px">30000</div>
<div class="a ct rt" style="right:733px;top:347px">0.352941176</div>
<div class="a" style="left:13px;top:358px;width:455px;height:11px;background:#fff"></div>
<div class="a" style="left:13px;top:369px;width:455px;height:1px;background:#a9d08e"></div>
<div class="a" style="left:144px;top:358px;width:1px;height:11px;background:#d4d4d4"></div>
<div class="a" style="left:236px;top:358px;width:1px;height:11px;background:#d4d4d4"></div>
<div class="a" style="left:292px;top:358px;width:1px;height:11px;background:#d4d4d4"></div>
<div class="a" style="left:348px;top:358px;width:1px;height:11px;background:#d4d4d4"></div>
<div class="a" style="left:404px;top:358px;width:1px;height:11px;background:#d4d4d4"></div>
<div class="a" style="left:468px;top:358px;width:1px;height:12px;background:#a9d08e"></div>
<div class="a ct" style="left:15px;top:359px">3月份销售业绩销售三组.xlsx</div>
<div class="a ct rt" style="right:965px;top:359px">3</div>
<div class="a ct" style="left:238px;top:359px">陈三</div>
<div class="a ct rt" style="right:853px;top:359px">98000</div>
<div class="a ct rt" style="right:797px;top:359px">50000</div>
<div class="a ct rt" style="right:733px;top:359px">0.510204082</div>
<div class="a" style="left:13px;top:370px;width:455px;height:11px;background:#e2efda"></div>
<div class="a" style="left:13px;top:381px;width:455px;height:1px;background:#a9d08e"></div>
<div class="a" style="left:468px;top:370px;width:1px;height:12px;background:#a9d08e"></div>
<div class="a ct" style="left:15px;top:371px">3月份销售业绩销售三组.xlsx</div>
<div class="a ct rt" style="right:965px;top:371px">4</div>
<div class="a ct" style="left:238px;top:371px">陈四</div>
<div class="a ct rt" style="right:853px;top:371px">120000</div>
<div class="a ct rt" style="right:797px;top:371px">45000</div>
<div class="a ct rt" style="right:733px;top:371px">0.375</div>
<div class="a" style="left:13px;top:382px;width:455px;height:10px;background:#fff"></div>
<div class="a" style="left:13px;top:392px;width:455px;height:1px;background:#a9d08e"></div>
<div class="a" style="left:144px;top:382px;width:1px;height:10px;background:#d4d4d4"></div>
<div class="a" style="left:236px;top:382px;width:1px;height:10px;background:#d4d4d4"></div>
<div class="a" style="left:292px;top:382px;width:1px;height:10px;background:#d4d4d4"></div>
<div class="a" style="left:348px;top:382px;width:1px;height:10px;background:#d4d4d4"></div>
<div class="a" style="left:404px;top:382px;width:1px;height:10px;background:#d4d4d4"></div>
<div class="a" style="left:468px;top:382px;width:1px;height:11px;background:#a9d08e"></div>
<div class="a ct" style="left:15px;top:383px">3月份销售业绩销售三组.xlsx</div>
<div class="a ct rt" style="right:965px;top:383px">5</div>
<div class="a ct" style="left:238px;top:383px">陈五</div>
<div class="a ct rt" style="right:853px;top:383px">88000</div>
<div class="a ct rt" style="right:797px;top:383px">30000</div>
<div class="a ct rt" style="right:733px;top:383px">0.340909091</div>
<div class="a" style="left:13px;top:393px;width:455px;height:11px;background:#e2efda"></div>
<div class="a" style="left:13px;top:404px;width:455px;height:1px;background:#a9d08e"></div>
<div class="a" style="left:468px;top:393px;width:1px;height:12px;background:#a9d08e"></div>
<div class="a ct" style="left:15px;top:394px">3月份销售业绩销售三组.xlsx</div>
<div class="a ct rt" style="right:965px;top:394px">6</div>
<div class="a ct" style="left:238px;top:394px">陈六</div>
<div class="a ct rt" style="right:853px;top:394px">150000</div>
<div class="a ct rt" style="right:797px;top:394px">80000</div>
<div class="a ct rt" style="right:733px;top:394px">0.533333333</div>
<div class="a" style="left:13px;top:405px;width:455px;height:11px;background:#fff"></div>
<div class="a" style="left:13px;top:416px;width:455px;height:1px;background:#a9d08e"></div>
<div class="a" style="left:144px;top:405px;width:1px;height:11px;background:#d4d4d4"></div>
<div class="a" style="left:236px;top:405px;width:1px;height:11px;background:#d4d4d4"></div>
<div class="a" style="left:292px;top:405px;width:1px;height:11px;background:#d4d4d4"></div>
<div class="a" style="left:348px;top:405px;width:1px;height:11px;background:#d4d4d4"></div>
<div class="a" style="left:404px;top:405px;width:1px;height:11px;background:#d4d4d4"></div>
<div class="a" style="left:468px;top:405px;width:1px;height:12px;background:#a9d08e"></div>
<div class="a ct" style="left:15px;top:406px">3月份销售业绩销售三组.xlsx</div>
<div class="a ct rt" style="right:965px;top:406px">7</div>
<div class="a ct" style="left:238px;top:406px">陈七</div>
<div class="a ct rt" style="right:853px;top:406px">79000</div>
<div class="a ct rt" style="right:797px;top:406px">40000</div>
<div class="a ct rt" style="right:733px;top:406px">0.506329114</div>
<div class="a" style="left:13px;top:417px;width:455px;height:11px;background:#e2efda"></div>
<div class="a" style="left:13px;top:428px;width:455px;height:1px;background:#a9d08e"></div>
<div class="a" style="left:468px;top:417px;width:1px;height:12px;background:#a9d08e"></div>
<div class="a ct" style="left:15px;top:418px">3月份销售业绩销售三组.xlsx</div>
<div class="a ct rt" style="right:965px;top:418px">8</div>
<div class="a ct" style="left:238px;top:418px">陈八</div>
<div class="a ct rt" style="right:853px;top:418px">100000</div>
<div class="a ct rt" style="right:797px;top:418px">60000</div>
<div class="a ct rt" style="right:733px;top:418px">0.6</div>
<div class="a" style="left:13px;top:429px;width:455px;height:11px;background:#fff"></div>
<div class="a" style="left:13px;top:440px;width:455px;height:1px;background:#a9d08e"></div>
<div class="a" style="left:144px;top:429px;width:1px;height:11px;background:#d4d4d4"></div>
<div class="a" style="left:236px;top:429px;width:1px;height:11px;background:#d4d4d4"></div>
<div class="a" style="left:292px;top:429px;width:1px;height:11px;background:#d4d4d4"></div>
<div class="a" style="left:348px;top:429px;width:1px;height:11px;background:#d4d4d4"></div>
<div class="a" style="left:404px;top:429px;width:1px;height:11px;background:#d4d4d4"></div>
<div class="a" style="left:468px;top:429px;width:1px;height:12px;background:#a9d08e"></div>
<div class="a ct" style="left:15px;top:430px">3月份销售业绩销售三组.xlsx</div>
<div class="a ct rt" style="right:965px;top:430px">9</div>
<div class="a ct" style="left:238px;top:430px">陈九</div>
<div class="a ct rt" style="right:853px;top:430px">98000</div>
<div class="a ct rt" style="right:797px;top:430px">40000</div>
<div class="a ct rt" style="right:733px;top:430px">0.408163265</div>
<div class="a" style="left:13px;top:441px;width:455px;height:11px;background:#e2efda"></div>
<div class="a" style="left:13px;top:452px;width:455px;height:1px;background:#a9d08e"></div>
<div class="a" style="left:468px;top:441px;width:1px;height:12px;background:#a9d08e"></div>
<div class="a ct" style="left:15px;top:442px">3月份销售业绩销售三组.xlsx</div>
<div class="a ct rt" style="right:965px;top:442px">10</div>
<div class="a ct" style="left:238px;top:442px">陈十</div>
<div class="a ct rt" style="right:853px;top:442px">85000</div>
<div class="a ct rt" style="right:797px;top:442px">40000</div>
<div class="a ct rt" style="right:733px;top:442px">0.470588235</div>
<div class="a" style="left:13px;top:453px;width:455px;height:11px;background:#fff"></div>
<div class="a" style="left:13px;top:464px;width:455px;height:1px;background:#a9d08e"></div>
<div class="a" style="left:144px;top:453px;width:1px;height:11px;background:#d4d4d4"></div>
<div class="a" style="left:236px;top:453px;width:1px;height:11px;background:#d4d4d4"></div>
<div class="a" style="left:292px;top:453px;width:1px;height:11px;background:#d4d4d4"></div>
<div class="a" style="left:348px;top:453px;width:1px;height:11px;background:#d4d4d4"></div>
<div class="a" style="left:404px;top:453px;width:1px;height:11px;background:#d4d4d4"></div>
<div class="a" style="left:468px;top:453px;width:1px;height:12px;background:#a9d08e"></div>
<div class="a ct" style="left:15px;top:454px">3月份销售业绩销售三组.xlsx</div>
<div class="a ct" style="left:146px;top:454px">合计</div>
<div class="a ct rt" style="right:853px;top:454px">1023000</div>
<div class="a ct rt" style="right:797px;top:454px">485000</div>
<div class="a ct rt" style="right:733px;top:454px">0.474095797</div>
<div class="a" style="left:13px;top:465px;width:455px;height:11px;background:#e2efda"></div>
<div class="a" style="left:13px;top:476px;width:455px;height:1px;background:#a9d08e"></div>
<div class="a" style="left:468px;top:465px;width:1px;height:12px;background:#a9d08e"></div>
<div class="a ct" style="left:15px;top:466px">3月份销售业绩销售二组.xlsx</div>
<div class="a ct" style="left:146px;top:466px">销售二组3月份业绩</div>
<div class="a" style="left:13px;top:477px;width:455px;height:11px;background:#fff"></div>
<div class="a" style="left:13px;top:488px;width:455px;height:1px;background:#a9d08e"></div>
<div class="a" style="left:144px;top:477px;width:1px;height:11px;background:#d4d4d4"></div>
<div class="a" style="left:236px;top:477px;width:1px;height:11px;background:#d4d4d4"></div>
<div class="a" style="left:292px;top:477px;width:1px;height:11px;background:#d4d4d4"></div>
<div class="a" style="left:348px;top:477px;width:1px;height:11px;background:#d4d4d4"></div>
<div class="a" style="left:404px;top:477px;width:1px;height:11px;background:#d4d4d4"></div>
<div class="a" style="left:468px;top:477px;width:1px;height:12px;background:#a9d08e"></div>
<div class="a ct" style="left:15px;top:478px">3月份销售业绩销售二组.xlsx</div>
<div class="a ct" style="left:146px;top:478px">序号</div>
<div class="a ct" style="left:238px;top:478px">姓名</div>
<div class="a ct" style="left:294px;top:478px">业绩目标</div>
<div class="a ct" style="left:350px;top:478px">完成业绩</div>
<div class="a ct" style="left:406px;top:478px">完成进度</div>
<div class="a" style="left:13px;top:489px;width:455px;height:11px;background:#e2efda"></div>
<div class="a" style="left:13px;top:500px;width:455px;height:1px;background:#a9d08e"></div>
<div class="a" style="left:468px;top:489px;width:1px;height:12px;background:#a9d08e"></div>
<div class="a ct" style="left:15px;top:490px">3月份销售业绩销售二组.xlsx</div>
<div class="a ct rt" style="right:965px;top:490px">1</div>
<div class="a ct" style="left:238px;top:490px">刘一</div>
<div class="a ct rt" style="right:853px;top:490px">110000</div>
<div class="a ct rt" style="right:797px;top:490px">70000</div>
<div class="a ct rt" style="right:733px;top:490px">0.636363636</div>
<div class="a" style="left:13px;top:501px;width:455px;height:11px;background:#fff"></div>
<div class="a" style="left:13px;top:512px;width:455px;height:1px;background:#a9d08e"></div>
<div class="a" style="left:144px;top:501px;width:1px;height:11px;background:#d4d4d4"></div>
<div class="a" style="left:236px;top:501px;width:1px;height:11px;background:#d4d4d4"></div>
<div class="a" style="left:292px;top:501px;width:1px;height:11px;background:#d4d4d4"></div>
<div class="a" style="left:348px;top:501px;width:1px;height:11px;background:#d4d4d4"></div>
<div class="a" style="left:404px;top:501px;width:1px;height:11px;background:#d4d4d4"></div>
<div class="a" style="left:468px;top:501px;width:1px;height:12px;background:#a9d08e"></div>
<div class="a ct" style="left:15px;top:502px">3月份销售业绩销售二组.xlsx</div>
<div class="a ct rt" style="right:965px;top:502px">2</div>
<div class="a ct" style="left:238px;top:502px">刘二</div>
<div class="a ct rt" style="right:853px;top:502px">90000</div>
<div class="a ct rt" style="right:797px;top:502px">30000</div>
<div class="a ct rt" style="right:733px;top:502px">0.333333333</div>
<div class="a" style="left:13px;top:513px;width:455px;height:11px;background:#e2efda"></div>
<div class="a" style="left:13px;top:524px;width:455px;height:1px;background:#a9d08e"></div>
<div class="a" style="left:468px;top:513px;width:1px;height:12px;background:#a9d08e"></div>
<div class="a ct" style="left:15px;top:514px">3月份销售业绩销售二组.xlsx</div>
<div class="a ct rt" style="right:965px;top:514px">3</div>
<div class="a ct" style="left:238px;top:514px">刘三</div>
<div class="a ct rt" style="right:853px;top:514px">150000</div>
<div class="a ct rt" style="right:797px;top:514px">50000</div>
<div class="a ct rt" style="right:733px;top:514px">0.333333333</div>
<div class="a" style="left:13px;top:525px;width:455px;height:11px;background:#fff"></div>
<div class="a" style="left:13px;top:536px;width:455px;height:1px;background:#a9d08e"></div>
<div class="a" style="left:144px;top:525px;width:1px;height:11px;background:#d4d4d4"></div>
<div class="a" style="left:236px;top:525px;width:1px;height:11px;background:#d4d4d4"></div>
<div class="a" style="left:292px;top:525px;width:1px;height:11px;background:#d4d4d4"></div>
<div class="a" style="left:348px;top:525px;width:1px;height:11px;background:#d4d4d4"></div>
<div class="a" style="left:404px;top:525px;width:1px;height:11px;background:#d4d4d4"></div>
<div class="a" style="left:468px;top:525px;width:1px;height:12px;background:#a9d08e"></div>
<div class="a ct" style="left:15px;top:526px">3月份销售业绩销售二组.xlsx</div>
<div class="a ct rt" style="right:965px;top:526px">4</div>
<div class="a ct" style="left:238px;top:526px">刘四</div>
<div class="a ct rt" style="right:853px;top:526px">80000</div>
<div class="a ct rt" style="right:797px;top:526px">45000</div>
<div class="a ct rt" style="right:733px;top:526px">0.5625</div>
<div class="a" style="left:13px;top:537px;width:455px;height:10px;background:#e2efda"></div>
<div class="a" style="left:13px;top:547px;width:455px;height:1px;background:#a9d08e"></div>
<div class="a" style="left:468px;top:537px;width:1px;height:11px;background:#a9d08e"></div>
<div class="a ct" style="left:15px;top:538px">3月份销售业绩销售二组.xlsx</div>
<div class="a ct rt" style="right:965px;top:538px">5</div>
<div class="a ct" style="left:238px;top:538px">刘五</div>
<div class="a ct rt" style="right:853px;top:538px">70000</div>
<div class="a ct rt" style="right:797px;top:538px">30000</div>
<div class="a ct rt" style="right:733px;top:538px">0.428571429</div>
<div class="a" style="left:13px;top:548px;width:455px;height:11px;background:#fff"></div>
<div class="a" style="left:13px;top:559px;width:455px;height:1px;background:#a9d08e"></div>
<div class="a" style="left:144px;top:548px;width:1px;height:11px;background:#d4d4d4"></div>
<div class="a" style="left:236px;top:548px;width:1px;height:11px;background:#d4d4d4"></div>
<div class="a" style="left:292px;top:548px;width:1px;height:11px;background:#d4d4d4"></div>
<div class="a" style="left:348px;top:548px;width:1px;height:11px;background:#d4d4d4"></div>
<div class="a" style="left:404px;top:548px;width:1px;height:11px;background:#d4d4d4"></div>
<div class="a" style="left:468px;top:548px;width:1px;height:12px;background:#a9d08e"></div>
<div class="a ct" style="left:15px;top:549px">3月份销售业绩销售二组.xlsx</div>
<div class="a ct rt" style="right:965px;top:549px">6</div>
<div class="a ct" style="left:238px;top:549px">刘六</div>
<div class="a ct rt" style="right:853px;top:549px">130000</div>
<div class="a ct rt" style="right:797px;top:549px">80000</div>
<div class="a ct rt" style="right:733px;top:549px">0.615384615</div>
<div class="a" style="left:13px;top:560px;width:455px;height:11px;background:#e2efda"></div>
<div class="a" style="left:13px;top:571px;width:455px;height:1px;background:#a9d08e"></div>
<div class="a" style="left:468px;top:560px;width:1px;height:12px;background:#a9d08e"></div>
<div class="a ct" style="left:15px;top:561px">3月份销售业绩销售二组.xlsx</div>
<div class="a ct rt" style="right:965px;top:561px">7</div>
<div class="a ct" style="left:238px;top:561px">刘七</div>
<div class="a ct rt" style="right:853px;top:561px">90000</div>
<div class="a ct rt" style="right:797px;top:561px">40000</div>
<div class="a ct rt" style="right:733px;top:561px">0.444444444</div>
<div class="a" style="left:13px;top:572px;width:455px;height:11px;background:#fff"></div>
<div class="a" style="left:13px;top:583px;width:455px;height:1px;background:#a9d08e"></div>
<div class="a" style="left:144px;top:572px;width:1px;height:11px;background:#d4d4d4"></div>
<div class="a" style="left:236px;top:572px;width:1px;height:11px;background:#d4d4d4"></div>
<div class="a" style="left:292px;top:572px;width:1px;height:11px;background:#d4d4d4"></div>
<div class="a" style="left:348px;top:572px;width:1px;height:11px;background:#d4d4d4"></div>
<div class="a" style="left:404px;top:572px;width:1px;height:11px;background:#d4d4d4"></div>
<div class="a" style="left:468px;top:572px;width:1px;height:12px;background:#a9d08e"></div>
<div class="a ct" style="left:15px;top:573px">3月份销售业绩销售二组.xlsx</div>
<div class="a ct rt" style="right:965px;top:573px">8</div>
<div class="a ct" style="left:238px;top:573px">刘八</div>
<div class="a ct rt" style="right:853px;top:573px">80000</div>
<div class="a ct rt" style="right:797px;top:573px">60000</div>
<div class="a ct rt" style="right:733px;top:573px">0.75</div>
<div class="a" style="left:13px;top:584px;width:455px;height:11px;background:#e2efda"></div>
<div class="a" style="left:13px;top:595px;width:455px;height:1px;background:#a9d08e"></div>
<div class="a" style="left:468px;top:584px;width:1px;height:12px;background:#a9d08e"></div>
<div class="a ct" style="left:15px;top:585px">3月份销售业绩销售二组.xlsx</div>
<div class="a ct rt" style="right:965px;top:585px">9</div>
<div class="a ct" style="left:238px;top:585px">刘九</div>
<div class="a ct rt" style="right:853px;top:585px">95000</div>
<div class="a ct rt" style="right:797px;top:585px">40000</div>
<div class="a ct rt" style="right:733px;top:585px">0.421052632</div>
<div class="a" style="left:13px;top:596px;width:455px;height:11px;background:#fff"></div>
<div class="a" style="left:13px;top:607px;width:455px;height:1px;background:#a9d08e"></div>
<div class="a" style="left:144px;top:596px;width:1px;height:11px;background:#d4d4d4"></div>
<div class="a" style="left:236px;top:596px;width:1px;height:11px;background:#d4d4d4"></div>
<div class="a" style="left:292px;top:596px;width:1px;height:11px;background:#d4d4d4"></div>
<div class="a" style="left:348px;top:596px;width:1px;height:11px;background:#d4d4d4"></div>
<div class="a" style="left:404px;top:596px;width:1px;height:11px;background:#d4d4d4"></div>
<div class="a" style="left:468px;top:596px;width:1px;height:12px;background:#a9d08e"></div>
<div class="a ct" style="left:15px;top:597px">3月份销售业绩销售二组.xlsx</div>
<div class="a ct rt" style="right:965px;top:597px">10</div>
<div class="a ct" style="left:238px;top:597px">刘十</div>
<div class="a ct rt" style="right:853px;top:597px">96000</div>
<div class="a ct rt" style="right:797px;top:597px">40000</div>
<div class="a ct rt" style="right:733px;top:597px">0.416666667</div>
<div class="a" style="left:13px;top:608px;width:455px;height:11px;background:#e2efda"></div>
<div class="a" style="left:13px;top:619px;width:455px;height:1px;background:#a9d08e"></div>
<div class="a" style="left:468px;top:608px;width:1px;height:12px;background:#a9d08e"></div>
<div class="a ct" style="left:15px;top:609px">3月份销售业绩销售二组.xlsx</div>
<div class="a ct" style="left:146px;top:609px">合计</div>
<div class="a ct rt" style="right:853px;top:609px">991000</div>
<div class="a ct rt" style="right:797px;top:609px">485000</div>
<div class="a ct rt" style="right:733px;top:609px">0.489404642</div>
<div class="a" style="left:12px;top:142px;width:133px;height:14px;border:2px solid #217346"></div>
<div class="a" style="left:143px;top:153px;width:4px;height:4px;background:#217346;border:1px solid #fff"></div>
<!-- ===== vertical scrollbar ===== -->
<div class="a" style="left:1051px;top:131px;width:1px;height:490px;background:#c6c6c6"></div>
<div class="a" style="left:1052px;top:131px;width:12px;height:508px;background:#e6e6e6"></div>
<div class="a" style="left:1053px;top:132px;width:10px;height:10px;background:#fff;border:1px solid #c6c6c6"></div>
<div class="a" style="left:1055px;top:136px;border-left:3px solid transparent;border-right:3px solid transparent;border-bottom:3px solid #555"></div>
<div class="a" style="left:1053px;top:142px;width:10px;height:470px;background:#dadada"></div>
<div class="a" style="left:1053px;top:142px;width:10px;height:355px;background:#fff;border:1px solid #c0c0c0"></div>
<div class="a" style="left:1053px;top:612px;width:10px;height:10px;background:#fff;border:1px solid #c6c6c6"></div>
<div class="a" style="left:1055px;top:616px;border-left:3px solid transparent;border-right:3px solid transparent;border-top:3px solid #555"></div>
<!-- ===== sheet tabs / h scroll ===== -->
<div class="a" style="left:0;top:620px;width:1064px;height:19px;background:#e6e6e6"></div>
<div class="a" style="left:0;top:620px;width:1052px;height:1px;background:#d0d0d0"></div>
<svg class="a" style="left:11px;top:626px" width="30" height="8" viewBox="0 0 30 8"><path d="M4 1L1.5 4 4 7M20 1l2.5 3L20 7" stroke="#c4c4c4" stroke-width="1" fill="none"/></svg>
<div class="a" style="left:58px;top:621px;width:44px;height:17px;background:#fff;border-bottom:2px solid #217346;border-left:1px solid #d0d0d0;border-right:1px solid #d0d0d0"></div>
<div class="a" style="left:66px;top:623px;font-size:9px;line-height:11px;color:#217346">Sheet2</div>
<div class="a" style="left:110px;top:623px;font-size:9px;line-height:11px;color:#444">Sheet1</div>
<div class="a" style="left:144px;top:624px;width:1px;height:11px;background:#bdbdbd"></div>
<svg class="a" style="left:164px;top:623px" width="13" height="13" viewBox="0 0 13 13"><circle cx="6.5" cy="6.5" r="5.3" fill="none" stroke="#777" stroke-width="1"/><path d="M6.5 3.5v6M3.5 6.5h6" stroke="#555" stroke-width="1.1"/></svg>
<svg class="a" style="left:645px;top:624px" width="4" height="12" viewBox="0 0 4 12"><path d="M2 1v1M2 5v1M2 9v1" stroke="#999"/></svg>
<div class="a" style="left:652px;top:625px;width:401px;height:10px;background:#dadada"></div>
<div class="a" style="left:652px;top:625px;width:10px;height:10px;background:#fff;border:1px solid #c6c6c6"></div>
<div class="a" style="left:655px;top:627px;border-top:3px solid transparent;border-bottom:3px solid transparent;border-right:3px solid #555"></div>
<div class="a" style="left:662px;top:625px;width:358px;height:10px;background:#fff;border:1px solid #c0c0c0"></div>
<div class="a" style="left:1043px;top:625px;width:10px;height:10px;background:#fff;border:1px solid #c6c6c6"></div>
<div class="a" style="left:1047px;top:627px;border-top:3px solid transparent;border-bottom:3px solid transparent;border-left:3px solid #555"></div>
<!-- ===== status bar ===== -->
<div class="a" style="left:0;top:638px;width:1200px;height:1px;background:#dadada"></div>
<div class="a" style="left:0;top:639px;width:1200px;height:14px;background:#f3f3f3"></div>
<div class="a" style="left:0;top:641px;font-size:8px;line-height:10px;color:#333">就绪</div>
<div class="a" style="left:1018px;top:639px;width:23px;height:14px;background:#cccccc"></div>
<svg class="a" style="left:1025px;top:641px" width="9" height="10" viewBox="0 0 9 10"><rect x="0.5" y="0.5" width="8" height="9" fill="none" stroke="#555"/><path d="M0.5 3.5h8M0.5 6.5h8M3.2 0.5v9M5.8 0.5v9" stroke="#555" stroke-width="0.8"/></svg>
<svg class="a" style="left:1048px;top:641px" width="10" height="10" viewBox="0 0 10 10"><rect x="0.5" y="0.5" width="9" height="9" fill="none" stroke="#777"/><rect x="2.5" y="2" width="5" height="6" fill="none" stroke="#777"/></svg>
<svg class="a" style="left:1072px;top:641px" width="10" height="10" viewBox="0 0 10 10"><rect x="0.5" y="0.5" width="9" height="9" fill="none" stroke="#777"/><path d="M3.5 0.5v4h4v-4" fill="none" stroke="#777"/></svg>
<div class="a" style="left:1092px;top:645px;width:4px;height:1px;background:#444"></div>
<div class="a" style="left:1099px;top:645px;width:62px;height:1.5px;background:#c8c8c8"></div>
<div class="a" style="left:1128px;top:642px;width:4px;height:8px;background:#666;border-radius:1px"></div>
<div class="a" style="left:1163px;top:645px;width:5px;height:1px;background:#444"></div>
<div class="a" style="left:1165px;top:643px;width:1px;height:5px;background:#444"></div>
<div class="a" style="left:1175px;top:641px;font-size:8px;line-height:10px;color:#333;-webkit-text-stroke:0.15px #333">100%</div>
<div class="a" style="left:0;top:652px;width:1200px;height:5px;background:#d6e3ea"></div>
<div class="a" style="left:1135px;top:652px;width:20px;height:5px;overflow:hidden"><div style="margin-top:2px;font-size:9px;line-height:9px;color:#222;font-weight:bold">19:55</div></div>
<div class="a" style="left:1197px;top:653px;width:1px;height:4px;background:#b8c4cc"></div>

<!-- ===== QUERY PANE ===== -->
<div class="a" style="left:1064px;top:125px;width:136px;height:514px;background:#e6e6e6;border-left:1px solid #d4d4d4"></div>
<div class="a" style="left:1073px;top:140px;font-size:13.5px;line-height:16px;color:#217346">查询 &amp; 连接</div>
<div class="a" style="left:1160px;top:145px;border-left:3px solid transparent;border-right:3px solid transparent;border-top:3.5px solid #555"></div>
<svg class="a" style="left:1181px;top:142px" width="8" height="8" viewBox="0 0 8 8"><path d="M0.8 0.8l6.4 6.4M7.2 0.8l-6.4 6.4" stroke="#444" stroke-width="1.1"/></svg>
<div class="pt" style="left:1071px;top:163px;-webkit-text-stroke:0.1px #333;clip-path:inset(0 0 0 2px)">查询</div>
<div class="a" style="left:1088px;top:165px;width:1px;height:10px;background:#c8c8c8"></div>
<div class="pt" style="left:1094px;top:163px;-webkit-text-stroke:0.1px #333">连接</div>
<div class="pt" style="left:1073px;top:182px;-webkit-text-stroke:0;font-size:7.5px;color:#444">个查询</div>
<div class="a" style="left:1073px;top:195px;width:118px;height:1px;background:#c8c8c8"></div>
<!-- tree -->
<div class="a" style="left:1073px;top:207px;border-top:2px solid transparent;border-bottom:2px solid transparent;border-right:2.5px solid #444"></div>
<div class="fold" style="left:1079px;top:205px"></div>
<div class="pt2" style="left:1092px;top:203px">从 数据 转换文件 [3]</div>
<div class="a" style="left:1078px;top:225px;border-left:3px solid transparent;border-bottom:3px solid #555"></div>
<div class="fold" style="left:1084px;top:223px"></div>
<div class="pt2" style="left:1097px;top:221px">示例查询 [2]</div>
<svg class="a" style="left:1090px;top:240px" width="9" height="10" viewBox="0 0 9 10"><rect x="0.5" y="0.5" width="8" height="9" fill="#fff" stroke="#777"/><path d="M2 2.5h1M2 5h1M2 7.5h1" stroke="#666"/><path d="M5 2.5h2M5 5h2M5 7.5h2" stroke="#2b78c6"/></svg>
<div class="pt2" style="left:1102px;top:239px;width:88px;overflow:hidden">示例文件参数1 (示例文件</div>
<div class="pt" style="left:1102px;top:253px">仅限连接。</div>
<svg class="a" style="left:1090px;top:272px" width="9" height="10" viewBox="0 0 9 10"><rect x="0.5" y="0.5" width="8" height="9" fill="#fff" stroke="#777"/><path d="M2 3.5h5M2 6.5h5" stroke="#777" stroke-width="0.8"/></svg>
<div class="pt2" style="left:1102px;top:270px">示例文件</div>
<div class="pt" style="left:1102px;top:284px">仅限连接。</div>
<svg class="a" style="left:1085px;top:303px" width="10" height="9" viewBox="0 0 10 9"><rect x="0.5" y="0.5" width="9" height="8" fill="#fff" stroke="#666"/><rect x="0.5" y="0.5" width="9" height="2" fill="#2b78c6"/><path d="M0.5 5h9M3.5 2.5v6M6.5 2.5v6" stroke="#888" stroke-width="0.8"/></svg>
<div class="pt2" style="left:1097px;top:301px">从 数据 转换示例文件</div>
<div class="pt" style="left:1097px;top:316px">仅限连接。</div>
<div class="a" style="left:1085px;top:333px;font-family:'Liberation Serif',serif;font-style:italic;font-size:10px;line-height:12px;color:#555">fx</div>
<div class="pt2" style="left:1097px;top:333px">从 数据 转换文件</div>
<div class="pt" style="left:1097px;top:347px">仅限连接。</div>
<div class="a" style="left:1073px;top:369px;border-top:2px solid transparent;border-bottom:2px solid transparent;border-right:2.5px solid #444"></div>
<div class="fold" style="left:1079px;top:366px"></div>
<div class="pt2" style="left:1092px;top:364px">其他查询 [1]</div>
<div class="a" style="left:1073px;top:381px;width:118px;height:32px;background:#9fd5b7"></div>
<svg class="a" style="left:1085px;top:385px" width="10" height="9" viewBox="0 0 10 9"><rect x="0.5" y="0.5" width="9" height="8" fill="#fff" stroke="#666"/><rect x="0.5" y="0.5" width="9" height="2" fill="#2b78c6"/><path d="M0.5 5h9M3.5 2.5v6M6.5 2.5v6" stroke="#888" stroke-width="0.8"/></svg>
<div class="pt2" style="left:1097px;top:383px">数据</div>
<div class="pt" style="left:1097px;top:397px">已加载 52 行。</div>
<!-- pane h scroll -->
<div class="a" style="left:1073px;top:618px;width:118px;height:11px;background:#efefef"></div>
<div class="a" style="left:1097px;top:618px;width:52px;height:11px;background:#c6c6c6"></div>
<svg class="a" style="left:1082px;top:619px" width="8" height="9" viewBox="0 0 8 9"><path d="M6 1L2.5 4.5 6 8" stroke="#444" stroke-width="1.4" fill="none"/></svg>
<svg class="a" style="left:1174px;top:619px" width="8" height="9" viewBox="0 0 8 9"><path d="M2 1l3.5 3.5L2 8" stroke="#444" stroke-width="1.4" fill="none"/></svg>

</body></html>
